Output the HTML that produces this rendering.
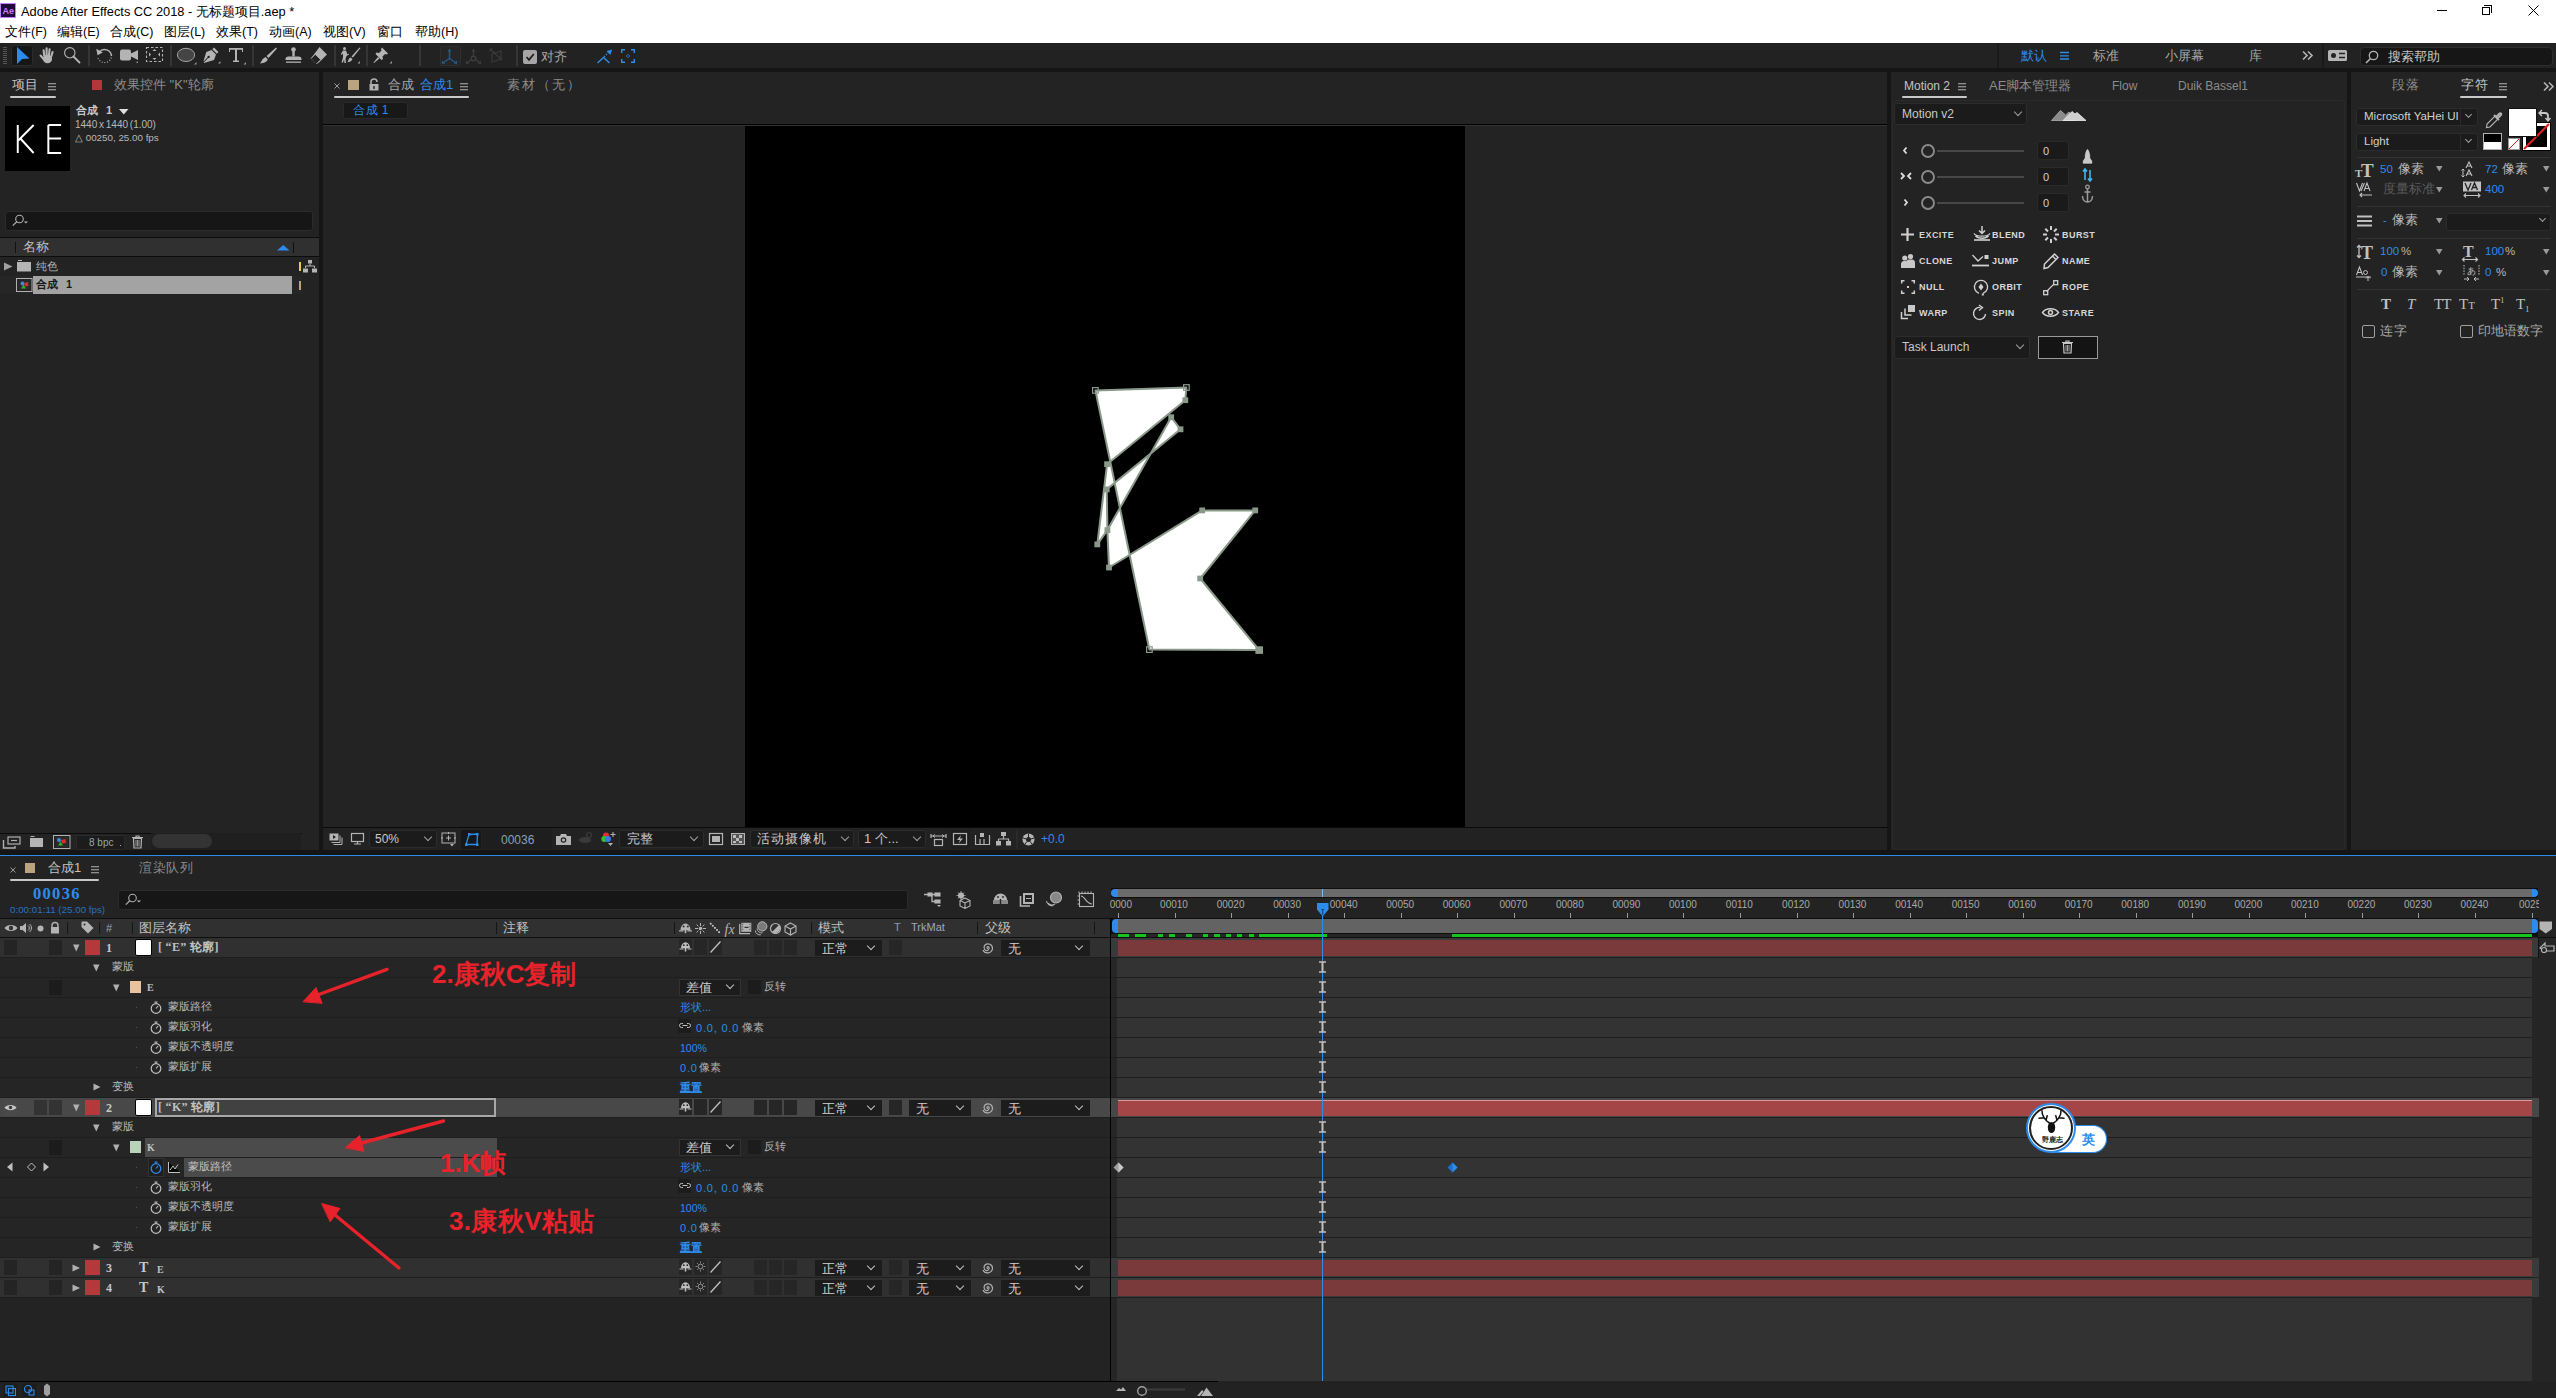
<!DOCTYPE html>
<html><head><meta charset="utf-8">
<style>
*{margin:0;padding:0;box-sizing:border-box}
html,body{width:2556px;height:1398px;overflow:hidden;background:#151515;font-family:"Liberation Sans",sans-serif;color:#a8a8a8;font-size:12px}
.a{position:absolute}
.t{position:absolute;white-space:nowrap;line-height:1}
.pnl{position:absolute;background:#232323}
svg{position:absolute;overflow:visible}
.sep{position:absolute;width:1.5px;background:#363636}
.dd{position:absolute;background:#1b1b1b;border:1px solid #2c2c2c;border-radius:3px}
.chev{position:absolute;width:6px;height:6px;border-right:1.3px solid #a0a0a0;border-bottom:1.3px solid #a0a0a0;transform:rotate(45deg)}
.blu{color:#2d8ceb}
</style></head><body>
<!-- ===== title bar + menu ===== -->
<div class="a" style="left:0;top:0;width:2556px;height:43px;background:#fff"></div>
<div class="a" style="left:0;top:3px;width:16px;height:15px;background:#1f0a3a;border:1px solid #c080ff"></div>
<div class="t" style="left:2.5px;top:6.5px;font-size:9px;color:#c77dff;font-weight:bold">Ae</div>
<div class="t" style="left:21px;top:5.8px;font-size:12.8px;color:#000">Adobe After Effects CC 2018 - 无标题项目.aep *</div>
<div class="a" style="left:2437px;top:10px;width:10px;height:1px;background:#000"></div>
<div class="a" style="left:2482px;top:7px;width:8px;height:8px;border:1px solid #000"></div>
<div class="a" style="left:2484px;top:5px;width:8px;height:8px;border-top:1px solid #000;border-right:1px solid #000"></div>
<svg style="left:2528px;top:5px" width="11" height="11"><path d="M0.5 0.5L10.5 10.5M10.5 0.5L0.5 10.5" stroke="#000" stroke-width="1"/></svg>
<div class="t" style="left:5px;top:26px;font-size:12.5px;color:#000">文件(F)</div>
<div class="t" style="left:57px;top:26px;font-size:12.5px;color:#000">编辑(E)</div>
<div class="t" style="left:110px;top:26px;font-size:12.5px;color:#000">合成(C)</div>
<div class="t" style="left:164px;top:26px;font-size:12.5px;color:#000">图层(L)</div>
<div class="t" style="left:216px;top:26px;font-size:12.5px;color:#000">效果(T)</div>
<div class="t" style="left:269px;top:26px;font-size:12.5px;color:#000">动画(A)</div>
<div class="t" style="left:323px;top:26px;font-size:12.5px;color:#000">视图(V)</div>
<div class="t" style="left:377px;top:26px;font-size:12.5px;color:#000">窗口</div>
<div class="t" style="left:415px;top:26px;font-size:12.5px;color:#000">帮助(H)</div>
<!-- ===== toolbar ===== -->
<div class="a" style="left:0;top:43px;width:2556px;height:25px;background:#222"></div>
<svg style="left:3px;top:46px" width="4" height="20"><g stroke="#555" stroke-width="1"><path d="M0 1.5H4M0 3.5H4M0 5.5H4M0 7.5H4M0 9.5H4M0 11.5H4M0 13.5H4M0 15.5H4M0 17.5H4"/></g></svg>
<div class="a" style="left:11px;top:45px;width:22px;height:21px;background:#161616;border:1px solid #2a2a2a;border-radius:3px"></div>
<svg style="left:16px;top:47px" width="14" height="18"><path d="M1 0L1 17L6 12L13.5 11.5Z" fill="#2d8ceb"/></svg>
<!-- hand -->
<svg style="left:39px;top:47px" width="17" height="17"><g stroke="#b4b4b4" stroke-width="2.1" stroke-linecap="round" fill="none"><path d="M5.2 9L4.6 3.2M7.6 8L7.6 1.2M10 8.2L10.6 2.2M12.2 9.5L13.6 5"/><path d="M4.5 12L1.5 8.5" stroke-width="2"/></g><ellipse cx="8.5" cy="12" rx="4.6" ry="4.2" fill="#b4b4b4"/></svg>
<!-- zoom -->
<svg style="left:64px;top:47px" width="17" height="17"><circle cx="5.8" cy="5.8" r="5.2" fill="none" stroke="#b4b4b4" stroke-width="1.1"/><path d="M9.5 9.5L15.5 15.5" stroke="#b4b4b4" stroke-width="1.8" stroke-linecap="round"/></svg>
<div class="sep" style="left:88px;top:45px;height:21px"></div>
<!-- rotate -->
<svg style="left:96px;top:47px" width="17" height="17"><path d="M3.2 5A7 7 0 0 1 15.5 9" fill="none" stroke="#b4b4b4" stroke-width="1.5"/><path d="M15.3 10.5A7 7 0 0 1 2 11" fill="none" stroke="#b4b4b4" stroke-width="1.1" stroke-dasharray="1 1.7"/><path d="M0.3 1.8L1.5 8.2L6.8 5.6Z" fill="#b4b4b4"/></svg>
<!-- camera -->
<svg style="left:120px;top:48px" width="19" height="16"><rect x="0" y="1.5" width="11" height="11" rx="2" fill="#b4b4b4"/><path d="M10 6L18 2V12L10 8Z" fill="#b4b4b4"/><path d="M18 13L18 15L16 15Z" fill="#999"/></svg>
<!-- pan behind -->
<svg style="left:146px;top:47px" width="17" height="17"><rect x="0.5" y="0.5" width="16" height="14" fill="none" stroke="#b4b4b4" stroke-width="1.1" stroke-dasharray="2.5 2"/><path d="M6.5 4H10.5L8.5 2Z M6.5 11H10.5L8.5 13Z M3 5.5V9.5L5 7.5Z M14 5.5V9.5L12 7.5Z" fill="#b4b4b4"/></svg>
<div class="sep" style="left:170px;top:45px;height:21px"></div>
<!-- ellipse -->
<svg style="left:177px;top:48px" width="20" height="17"><ellipse cx="9" cy="6.9" rx="8.6" ry="6.6" fill="#444" stroke="#b0b0b0" stroke-width="0.9"/><path d="M19.5 14L19.5 16.5L17 16.5Z" fill="#999"/></svg>
<!-- pen -->
<svg style="left:203px;top:47px" width="18" height="17"><path d="M11 0.5L15.5 5L13.8 6.7L9.3 2.2Z M8.5 3L13 7.5L11 13L1 16L0.8 15.5L5.2 11.1A1.2 1.2 0 1 0 4.5 10.4L0.3 14.8L3.3 5Z" fill="#b4b4b4"/><path d="M17.5 14L17.5 16.5L15 16.5Z" fill="#999"/></svg>
<!-- T -->
<svg style="left:229px;top:48px" width="18" height="17"><path d="M0 0H14V4H13V1.8H8V12.5H10V14H4V12.5H6V1.8H1V4H0Z" fill="#b4b4b4"/><path d="M17 14L17 16.5L14.5 16.5Z" fill="#999"/></svg>
<div class="sep" style="left:252px;top:45px;height:21px"></div>
<!-- brush -->
<svg style="left:260px;top:47px" width="17" height="17"><path d="M16 0.5L17 1.5L8.5 11L6.5 9Z" fill="#b4b4b4"/><path d="M5.5 10L7.8 12.2C7 15 4 16 0 16.5C1.5 15 2 11.5 5.5 10Z" fill="#b4b4b4"/></svg>
<!-- stamp -->
<svg style="left:285px;top:47px" width="17" height="17"><circle cx="8.5" cy="2.5" r="2.3" fill="#b4b4b4"/><rect x="7.3" y="3.5" width="2.4" height="6" fill="#b4b4b4"/><path d="M3.5 9.5H13.5C15.5 9.5 16.5 10.5 16.5 12V13H0.5V12C0.5 10.5 1.5 9.5 3.5 9.5Z" fill="#b4b4b4"/><rect x="1" y="14.5" width="15" height="1.3" fill="#b4b4b4"/></svg>
<!-- eraser -->
<svg style="left:310px;top:47px" width="18" height="17"><path d="M9.5 0L17 7.5L9 15.5L5.5 16L1 11.5Z" fill="#b4b4b4"/><path d="M1 11.5L5.3 7.2L10.8 12.7L6.5 17" fill="#222" stroke="#b4b4b4" stroke-width="1"/></svg>
<div class="sep" style="left:334px;top:45px;height:21px"></div>
<!-- puppet -->
<svg style="left:340px;top:47px" width="21" height="17"><circle cx="4.5" cy="1.5" r="1.5" fill="#b4b4b4"/><path d="M3 3.5H6L7.5 7.5L8.5 6.5L9 7.5L6.5 9L5.5 12L6 16H4.5L4 12.5L3 15.5H1.5L3 10.5L3 6.5L1.5 8L0.8 7Z" fill="#b4b4b4"/><path d="M19.5 0.5L20.5 1L13 10.5L11.5 9.5Z M10.5 10.5L12.5 12C11.5 14.5 9.5 15 7.5 15C8.5 13.5 8.5 11 10.5 10.5Z" fill="#b4b4b4"/><path d="M20 14L20 16.5L17.5 16.5Z" fill="#999"/></svg>
<div class="sep" style="left:366px;top:45px;height:21px"></div>
<!-- pin -->
<svg style="left:373px;top:47px" width="20" height="17"><path d="M9 0.5L15 6.5L13.5 7.5L12 7L9.5 9.5L10 12L8.5 13L2.5 7L3.5 5.5L6 6L8.5 3.5L8 2Z" fill="#b4b4b4"/><path d="M5 10L6.5 11.5L1 16L0.5 15.5Z" fill="#b4b4b4"/><path d="M19 14L19 16.5L16.5 16.5Z" fill="#999"/></svg>
<div class="sep" style="left:419px;top:45px;height:21px"></div>
<div class="a" style="left:440px;top:46px;width:21px;height:20px;background:#262626;border:1px solid #2e2e2e;border-radius:2px"></div>
<svg style="left:441px;top:48px" width="18" height="17"><path d="M8.5 3V10.5M8.5 10.5L2.5 14.5M8.5 10.5L14.5 14.5" stroke="#245a8c" stroke-width="1.4" fill="none"/><path d="M6.5 3.5L8.5 0.5L10.5 3.5Z M1 12.5L1 16L4.5 15.5Z M16 12.5L16 16L12.5 15.5Z" fill="#245a8c"/></svg>
<svg style="left:465px;top:48px" width="18" height="17"><path d="M8.5 3V8.5M6.5 11.5L2.5 14.5M10.5 11.5L14.5 14.5" stroke="#3e3e3e" stroke-width="1.3" fill="none"/><circle cx="8.5" cy="10.5" r="2.3" fill="none" stroke="#3e3e3e" stroke-width="1.3"/><path d="M6.5 3.5L8.5 0.5L10.5 3.5Z M1 12.5L1 16L4.5 15.5Z M16 12.5L16 16L12.5 15.5Z" fill="#3e3e3e"/></svg>
<svg style="left:489px;top:48px" width="16" height="16"><path d="M3 6L12 3V11L3 14Z M1 1L13 12" stroke="#3a3a3a" stroke-width="1.2" fill="none"/><path d="M0.5 0.5H4L0.5 4Z" fill="#3a3a3a"/></svg>
<div class="sep" style="left:516px;top:45px;height:21px"></div>
<div class="a" style="left:523px;top:50px;width:14px;height:14px;background:#a6a6a6;border-radius:2px"></div>
<svg style="left:525px;top:52px" width="10" height="10"><path d="M1.5 5L4 7.8L8.8 2" stroke="#1f1f1f" stroke-width="1.8" fill="none"/></svg>
<div class="t" style="left:541px;top:50px;font-size:13px;color:#a8a8a8">对齐</div>
<svg style="left:597px;top:49px" width="16" height="15"><path d="M0.5 14L6.5 8.5L12.5 14" stroke="#2d8ceb" stroke-width="1.4" fill="none"/><path d="M7 8L12 3" stroke="#2d8ceb" stroke-width="1.2" stroke-dasharray="1.5 1.2"/><path d="M9.5 2L15 0.5L13.5 6Z" fill="#2d8ceb"/></svg>
<svg style="left:621px;top:49px" width="14" height="14"><path d="M0.7 4V0.7H4M10 0.7H13.3V4M13.3 10V13.3H10M4 13.3H0.7V10" stroke="#2d8ceb" stroke-width="1.4" fill="none"/><path d="M5 7H6.5M7.5 7H9M7 5V6M7 8V9" stroke="#2d8ceb" stroke-width="1"/></svg>
<!-- right toolbar -->
<div class="sep" style="left:1997px;top:43px;height:25px;background:#1a1a1a"></div>
<div class="t blu" style="left:2021px;top:49px;font-size:13px">默认</div>
<svg style="left:2060px;top:51px" width="10" height="10"><path d="M0 1.5H9M0 4.8H9M0 8H9" stroke="#2d8ceb" stroke-width="1.3"/></svg>
<div class="t" style="left:2093px;top:49px;font-size:13px;color:#a8a8a8">标准</div>
<div class="t" style="left:2165px;top:49px;font-size:13px;color:#a8a8a8">小屏幕</div>
<div class="t" style="left:2249px;top:49px;font-size:13px;color:#a8a8a8">库</div>
<svg style="left:2302px;top:51px" width="12" height="9"><path d="M1 0.5L5 4.5L1 8.5M6 0.5L10 4.5L6 8.5" stroke="#b4b4b4" stroke-width="1.6" fill="none"/></svg>
<div class="sep" style="left:2322px;top:43px;height:25px;background:#1a1a1a"></div>
<svg style="left:2328px;top:50px" width="20" height="12"><rect x="0" y="0" width="19" height="11" rx="1.5" fill="#b4b4b4"/><circle cx="5.5" cy="5.5" r="2.5" fill="#222"/><path d="M11 3.5H17M11 7.5H17" stroke="#222" stroke-width="1.6"/></svg>
<div class="a" style="left:2360px;top:47px;width:193px;height:19px;background:#161616;border:1px solid #2d2d2d;border-radius:4px"></div>
<svg style="left:2365px;top:50px" width="14" height="14"><circle cx="8.5" cy="5.5" r="4.2" fill="none" stroke="#b4b4b4" stroke-width="1.3"/><path d="M5.5 8.5L1 13" stroke="#b4b4b4" stroke-width="1.6"/></svg>
<div class="t" style="left:2388px;top:50px;font-size:13px;color:#c8c8c8">搜索帮助</div>
<!-- gap row -->
<div class="a" style="left:0;top:68px;width:2556px;height:4px;background:#151515"></div>
<!-- ===== project panel ===== -->
<div class="pnl" style="left:0;top:72px;width:319px;height:778px"></div>
<div class="t" style="left:12px;top:78px;font-size:13px;color:#c4c4c4">项目</div>
<svg style="left:48px;top:83px" width="9" height="8"><path d="M0 0.7H8M0 3.7H8M0 6.7H8" stroke="#b4b4b4" stroke-width="1.1"/></svg>
<div class="a" style="left:10px;top:96px;width:46px;height:2px;background:#c8c8c8;border-radius:1px"></div>
<div class="a" style="left:92px;top:80px;width:10px;height:10px;background:#b5363a"></div>
<div class="t" style="left:114px;top:78px;font-size:13px;color:#8c8c8c">效果控件 "K"轮廓</div>
<div class="a" style="left:5px;top:106px;width:65px;height:65px;background:#000"></div>
<svg style="left:16px;top:125px" width="46" height="30"><path d="M1.8 0V28M1.8 16L18 0M4.5 13.5L18 28M33 0V28H46M33 0H46M33 13.5H46" stroke="#fff" stroke-width="2" fill="none" transform="scale(0.98,1)"/></svg>
<div class="t" style="left:76px;top:105px;font-size:11px;color:#c8c8c8;font-weight:bold;word-spacing:5px">合成 1</div>
<svg style="left:119px;top:109px" width="10" height="6"><path d="M0 0H9.5L4.75 5.5Z" fill="#e0e0e0"/></svg>
<div class="t" style="left:75px;top:120px;font-size:10px;color:#b8b8b8;word-spacing:-1px">1440 x 1440 (1.00)</div>
<div class="t" style="left:75px;top:133px;font-size:9.8px;color:#b8b8b8">△ 00250, 25.00 fps</div>
<!-- search -->
<div class="a" style="left:5px;top:211px;width:308px;height:20px;background:#161616;border:1px solid #2b2b2b;border-radius:3px"></div>
<svg style="left:12px;top:214px" width="18" height="13"><circle cx="7.5" cy="5" r="3.8" fill="none" stroke="#b0b0b0" stroke-width="1.1"/><path d="M5 7.5L0.8 11.7" stroke="#b0b0b0" stroke-width="1.2"/><path d="M11.8 7.5H16L13.9 9.5Z" fill="#b0b0b0"/></svg>
<!-- header -->
<div class="a" style="left:0;top:237px;width:319px;height:1px;background:#0c0c0c"></div>
<div class="a" style="left:0;top:238px;width:319px;height:18px;background:#303030"></div>
<div class="a" style="left:0;top:256px;width:319px;height:1px;background:#0c0c0c"></div>
<div class="a" style="left:15px;top:242px;width:1px;height:11px;background:#111"></div>
<div class="t" style="left:23px;top:240px;font-size:13px;color:#c0c0c0">名称</div>
<svg style="left:277px;top:245px" width="13" height="6"><path d="M0 5.5H12.5L6.25 0Z" fill="#2d8ceb"/></svg>
<div class="a" style="left:293px;top:242px;width:1px;height:11px;background:#111"></div>
<!-- row solid -->
<svg style="left:4px;top:262px" width="9" height="9"><path d="M0 0.5L8.5 4.5L0 8.5Z" fill="#a0a0a0"/></svg>
<svg style="left:17px;top:260px" width="15" height="12"><rect x="0" y="2" width="14" height="9.5" fill="#b4b4b4"/><rect x="1" y="0" width="4" height="1" fill="#b4b4b4"/></svg>
<div class="t" style="left:36px;top:261px;font-size:11px;color:#b0b0b0">纯色</div>
<div class="a" style="left:299px;top:262px;width:2px;height:9px;background:#e3cf4e"></div>
<svg style="left:303px;top:260px" width="14" height="13"><rect x="5" y="0" width="4" height="3.5" fill="#b4b4b4"/><path d="M7 3.5V6M2.5 6H11.5V8M2.5 6V8" stroke="#b4b4b4" stroke-width="1" fill="none"/><rect x="0" y="8.5" width="5" height="4" fill="#b4b4b4"/><rect x="9" y="8.5" width="5" height="4" fill="#b4b4b4"/></svg>
<!-- row comp -->
<div class="a" style="left:0;top:276px;width:302px;height:18px;background:#262626"></div>
<div class="a" style="left:33px;top:276px;width:259px;height:18px;background:#a3a3a3"></div>
<svg style="left:16px;top:278px" width="17" height="14"><rect x="0.5" y="0.5" width="15.5" height="13" fill="none" stroke="#b0b0b0"/><rect x="2.5" y="2.5" width="11.5" height="9" fill="#2a2a2a"/><circle cx="6.5" cy="5.5" r="2" fill="#3a8be0"/><path d="M8 5L12 4L12.5 8L9 8.5Z" fill="#d03030"/><path d="M5 10.5L7.5 6.5L10 10.5Z" fill="#2eb02e"/></svg>
<div class="t" style="left:36px;top:279px;font-size:11px;color:#1a1a1a;font-weight:bold;word-spacing:5px">合成 1</div>
<div class="a" style="left:299px;top:281px;width:2px;height:9px;background:#b9a47e"></div>
<!-- bottom bar -->
<div class="a" style="left:0;top:833px;width:302px;height:1px;background:#0c0c0c"></div>
<svg style="left:3px;top:836px" width="18" height="13"><rect x="5" y="1" width="12" height="7" fill="none" stroke="#b0b0b0" stroke-width="1.2"/><path d="M8 4.5H14" stroke="#b0b0b0" stroke-width="1.2"/><path d="M0.5 4V12H12V10" stroke="#b0b0b0" stroke-width="1.4" fill="none"/></svg>
<svg style="left:30px;top:836px" width="14" height="11"><rect x="0" y="2" width="13" height="9" fill="#b4b4b4"/><rect x="0.5" y="0" width="4" height="1" fill="#b4b4b4"/></svg>
<svg style="left:53px;top:835px" width="18" height="14"><rect x="0.5" y="0.5" width="16.5" height="13" fill="none" stroke="#b0b0b0"/><rect x="2.5" y="1.5" width="12.5" height="11" fill="#2a2a2a"/><circle cx="6" cy="5" r="2" fill="#3a8be0"/><path d="M8 5L12.5 4L13 8L9 8.5Z" fill="#d03030"/><path d="M5 10.5L7.5 6.5L10 10.5Z" fill="#2eb02e"/></svg>
<div class="a" style="left:76px;top:835px;width:49px;height:15px;background:#1c1c1c;border:1px solid #2a2a2a;border-radius:2px"></div>
<div class="t" style="left:89px;top:838px;font-size:10px;color:#9aa4b0">8 bpc</div>
<div class="a" style="left:120px;top:845px;width:1px;height:1px;background:#aaa"></div>
<svg style="left:132px;top:835px" width="12" height="14"><path d="M0 2.5H11M4 2.5V1H7V2.5" stroke="#b4b4b4" stroke-width="1.2" fill="none"/><path d="M1.5 3.5H9.5L9 13H2Z" fill="none" stroke="#b4b4b4" stroke-width="1.2"/><path d="M4 5V11.5M5.5 5V11.5M7 5V11.5" stroke="#b4b4b4" stroke-width="0.8"/></svg>
<div class="a" style="left:151px;top:833px;width:150px;height:17px;background:#1f1f1f"></div>
<div class="a" style="left:152px;top:834px;width:60px;height:14px;background:#333;border-radius:7px"></div>
<!-- ===== comp panel ===== -->
<div class="pnl" style="left:323px;top:72px;width:1564px;height:778px"></div>
<svg style="left:334px;top:83px" width="6" height="6"><path d="M0.5 0.5L5.5 5.5M5.5 0.5L0.5 5.5" stroke="#999" stroke-width="1"/></svg>
<div class="a" style="left:348px;top:80px;width:11px;height:10px;background:#b9a47e"></div>
<svg style="left:369px;top:79px" width="10" height="12"><path d="M2 5V3A3 3 0 0 1 8 3" stroke="#b0b0b0" stroke-width="1.5" fill="none"/><rect x="0.5" y="5" width="9" height="6.5" fill="#b0b0b0"/><rect x="4.3" y="7" width="1.4" height="3" fill="#232323"/></svg>
<div class="t" style="left:388px;top:78px;font-size:13px;color:#a8a8a8">合成</div>
<div class="t blu" style="left:420px;top:78px;font-size:13px">合成1</div>
<svg style="left:460px;top:83px" width="9" height="8"><path d="M0 0.7H8M0 3.7H8M0 6.7H8" stroke="#b4b4b4" stroke-width="1.1"/></svg>
<div class="a" style="left:334px;top:96px;width:135px;height:2px;background:#c8c8c8;border-radius:1px"></div>
<div class="t" style="left:507px;top:78px;font-size:13px;color:#8c8c8c;letter-spacing:2px">素材（无）</div>
<div class="a" style="left:343px;top:102px;width:65px;height:17px;background:#181818;border:1px solid #2a2a2a;border-radius:3px"></div>
<div class="t blu" style="left:353px;top:104px;font-size:12px;letter-spacing:0.5px">合成 1</div>
<div class="a" style="left:323px;top:124px;width:1564px;height:1px;background:#000"></div>
<div class="a" style="left:323px;top:125px;width:1564px;height:1px;background:#333"></div>
<!-- canvas -->
<div class="a" style="left:745px;top:126px;width:720px;height:701px;background:#000"></div>
<svg style="left:0;top:0" width="2556" height="1398">
<path d="M1095.4 390.4L1186.4 387.5L1185.3 400.2L1107.1 464.2L1097.3 544.4L1107.4 530.1L1171.2 417.2L1180.5 429.3L1106.7 489.4L1107.4 530.1L1109 567.5L1202.2 510.4L1255.2 510.4L1200.2 578.5L1259.2 650.1L1149.4 649.6Z" fill="#fff" fill-rule="evenodd" stroke="#8b998a" stroke-width="2" stroke-linejoin="round"/>
<rect x="1092.6" y="387.6" width="5.6" height="5.6" fill="none" stroke="#8b998a" stroke-width="1.2"/>
<rect x="1183.6" y="384.7" width="5.6" height="5.6" fill="none" stroke="#8b998a" stroke-width="1.2"/>
<rect x="1182.4" y="397.3" width="5.8" height="5.8" fill="#8b998a"/>
<rect x="1168.3" y="414.3" width="5.8" height="5.8" fill="#8b998a"/>
<rect x="1177.6" y="426.4" width="5.8" height="5.8" fill="#8b998a"/>
<rect x="1104.2" y="461.3" width="5.8" height="5.8" fill="#8b998a"/>
<rect x="1103.8" y="486.5" width="5.8" height="5.8" fill="#8b998a"/>
<rect x="1104.5" y="527.2" width="5.8" height="5.8" fill="#8b998a"/>
<rect x="1094.4" y="541.5" width="5.8" height="5.8" fill="#8b998a"/>
<rect x="1106.1" y="564.6" width="5.8" height="5.8" fill="#8b998a"/>
<rect x="1199.3" y="507.5" width="5.8" height="5.8" fill="#8b998a"/>
<rect x="1252.3" y="507.5" width="5.8" height="5.8" fill="#8b998a"/>
<rect x="1197.3" y="575.6" width="5.8" height="5.8" fill="#8b998a"/>
<rect x="1255.4" y="646.3" width="7.6" height="7.6" fill="#8b998a"/>
<rect x="1146.6" y="646.8" width="5.6" height="5.6" fill="none" stroke="#8b998a" stroke-width="1.2"/>
</svg>
<!-- viewer bottom toolbar -->
<div class="a" style="left:323px;top:827px;width:1564px;height:1px;background:#0a0a0a"></div>
<div class="a" style="left:323px;top:828px;width:1564px;height:22px;background:#222"></div>
<svg style="left:329px;top:833px" width="14" height="13"><rect x="0.5" y="0.5" width="9" height="7" fill="#b4b4b4"/><path d="M4 2L7 4L4 6Z" fill="#222"/><path d="M11 2.5V9.5H2.5M13 4.5V11.5H4.5" stroke="#b4b4b4" stroke-width="1" fill="none"/></svg>
<svg style="left:351px;top:833px" width="13" height="12"><rect x="0.5" y="0.5" width="12" height="8" fill="none" stroke="#b4b4b4" stroke-width="1.2"/><path d="M6.5 8.5V10.5M3 11H10" stroke="#b4b4b4" stroke-width="1.2"/></svg>
<div class="dd" style="left:369px;top:830px;width:68px;height:18px"></div>
<div class="t" style="left:375px;top:833px;font-size:12px;color:#c8c8c8">50%</div>
<div class="chev" style="left:425px;top:834px"></div>
<svg style="left:441px;top:832px" width="16" height="16"><rect x="1" y="1" width="13" height="10" fill="none" stroke="#b4b4b4" stroke-width="1"/><path d="M7.5 3.5V8.5M5 6H10" stroke="#b4b4b4" stroke-width="1"/><path d="M0 6H2M13 6H15M7.5 0V2" stroke="#b4b4b4"/><path d="M9 12H13L11 14.5Z" fill="#b4b4b4"/></svg>
<div class="a" style="left:461px;top:830px;width:20px;height:19px;background:#171717;border-radius:3px"></div>
<svg style="left:465px;top:833px" width="14" height="13"><path d="M4 1.5L12.5 1L12 11.5L1 11.5Z" fill="none" stroke="#2d8ceb" stroke-width="1.3"/><rect x="3" y="0" width="2.5" height="2.5" fill="#2d8ceb"/><rect x="11" y="0" width="2.5" height="2.5" fill="#2d8ceb"/><rect x="0" y="10.5" width="2.5" height="2.5" fill="#2d8ceb"/><rect x="11" y="10.5" width="2.5" height="2.5" fill="#2d8ceb"/></svg>
<div class="a" style="left:482px;top:829px;width:70px;height:20px;background:#1e1e1e"></div>
<div class="t" style="left:501px;top:834px;font-size:12px;color:#8aa0b8">00036</div>
<svg style="left:556px;top:833px" width="15" height="12"><path d="M0 3H4L5 1H10L11 3H15V12H0Z" fill="#b4b4b4"/><circle cx="7.5" cy="7" r="2.8" fill="#222"/><circle cx="7.5" cy="7" r="1.6" fill="#b4b4b4"/></svg>
<svg style="left:578px;top:832px" width="15" height="13"><path d="M0.5 8C3 4 11 4 13.5 8C11 12 3 12 0.5 8Z" fill="#3a3a3a"/><circle cx="11" cy="3" r="2.5" fill="none" stroke="#3a3a3a" stroke-width="1.2"/></svg>
<svg style="left:601px;top:831px" width="15" height="17"><circle cx="5" cy="4.5" r="3" fill="#e03030"/><circle cx="3.3" cy="8" r="3" fill="#30c030"/><circle cx="7" cy="8" r="3" fill="#3a7ae8"/><path d="M12 1V6M9.5 3.5H14.5" stroke="#b4b4b4" stroke-width="1.1"/><path d="M7 12H12L9.5 15Z" fill="#b4b4b4"/></svg>
<div class="dd" style="left:619px;top:830px;width:85px;height:18px"></div>
<div class="t" style="left:627px;top:832px;font-size:13px;color:#c8c8c8">完整</div>
<div class="chev" style="left:691px;top:834px"></div>
<svg style="left:709px;top:833px" width="14" height="12"><rect x="0.5" y="0.5" width="13" height="11" fill="none" stroke="#b4b4b4" stroke-width="1.2"/><rect x="3" y="3" width="8" height="6" fill="#b4b4b4"/></svg>
<svg style="left:731px;top:833px" width="14" height="12"><rect x="0.5" y="0.5" width="13" height="11" fill="#555" stroke="#b4b4b4" stroke-width="1"/><path d="M2 2H5V5H2ZM8 2H11V5H8ZM5 5H8V8H5ZM2 8H5V10H2ZM8 8H11V10H8Z" fill="#bbb"/></svg>
<div class="dd" style="left:750px;top:830px;width:104px;height:18px"></div>
<div class="t" style="left:757px;top:832px;font-size:13px;color:#c8c8c8;letter-spacing:1px">活动摄像机</div>
<div class="chev" style="left:842px;top:834px"></div>
<div class="dd" style="left:858px;top:830px;width:68px;height:18px"></div>
<div class="t" style="left:864px;top:832px;font-size:13px;color:#c8c8c8">1 个...</div>
<div class="chev" style="left:914px;top:834px"></div>
<svg style="left:930px;top:833px" width="17" height="13"><path d="M1 1V5M16 1V5M1 3H16" stroke="#b4b4b4" stroke-width="1.2"/><path d="M3 3L5 1.5M3 3L5 4.5M14 3L12 1.5M14 3L12 4.5" stroke="#b4b4b4"/><rect x="4.5" y="6.5" width="8" height="6" fill="none" stroke="#b4b4b4" stroke-width="1.2"/></svg>
<div class="a" style="left:951px;top:830px;width:19px;height:19px;background:#1e1e1e"></div>
<svg style="left:953px;top:833px" width="15" height="13"><rect x="0.5" y="0.5" width="13" height="11" fill="none" stroke="#b4b4b4" stroke-width="1.2"/><path d="M8 2L4 7H7L5.5 10.5L10 5.5H7Z" fill="#b4b4b4"/></svg>
<svg style="left:975px;top:833px" width="15" height="12"><rect x="5" y="0" width="4" height="4" fill="#b4b4b4"/><path d="M0.5 2V11.5H14.5V2M5 6V11M9 6V11" stroke="#b4b4b4" stroke-width="1.2" fill="none"/></svg>
<svg style="left:996px;top:832px" width="15" height="14"><rect x="5" y="0" width="5" height="4" fill="#b4b4b4"/><path d="M7.5 4V7M2.5 7H12.5V9M2.5 7V9" stroke="#b4b4b4" stroke-width="1.2" fill="none"/><rect x="0" y="9" width="5" height="4.5" fill="#b4b4b4"/><rect x="10" y="9" width="5" height="4.5" fill="#b4b4b4"/></svg>
<div class="sep" style="left:1016px;top:830px;height:19px;background:#2a2a2a"></div>
<svg style="left:1022px;top:833px" width="13" height="13"><circle cx="6.5" cy="6.5" r="6" fill="#b4b4b4"/><circle cx="6.5" cy="6.5" r="2.5" fill="#222"/><path d="M6.5 0.5L6.5 4M12 5L9 6M10 11L8 8.5M3 11L5 8.5M1 5L4 6" stroke="#222" stroke-width="1"/></svg>
<div class="t blu" style="left:1041px;top:833px;font-size:12px">+0.0</div>
<!-- ===== Motion 2 panel ===== -->
<div class="pnl" style="left:1891px;top:72px;width:456px;height:778px"></div>
<div class="t" style="left:1904px;top:80px;font-size:12px;color:#c4c4c4">Motion 2</div>
<svg style="left:1958px;top:83px" width="9" height="8"><path d="M0 0.7H8M0 3.7H8M0 6.7H8" stroke="#b4b4b4" stroke-width="1.1"/></svg>
<div class="a" style="left:1902px;top:96px;width:65px;height:2px;background:#c8c8c8;border-radius:1px"></div>
<div class="t" style="left:1989px;top:79px;font-size:13px;color:#8c8c8c">AE脚本管理器</div>
<div class="t" style="left:2112px;top:80px;font-size:12px;color:#8c8c8c">Flow</div>
<div class="t" style="left:2178px;top:80px;font-size:12px;color:#8c8c8c">Duik Bassel1</div>
<div class="a" style="left:1892px;top:100px;width:453px;height:750px;border:1px solid #2a2a2a;border-radius:3px"></div>
<div class="dd" style="left:1894px;top:103px;width:133px;height:22px"></div>
<div class="t" style="left:1902px;top:108px;font-size:12px;color:#c8c8c8">Motion v2</div>
<div class="chev" style="left:2015px;top:109px"></div>
<svg style="left:2051px;top:108px" width="37" height="13"><path d="M0.5 12.5L9.5 2.5L14.5 7L18 4L25 12.5Z" fill="#8a8a8a" stroke="#b0b0b0" stroke-width="0.8"/><path d="M12 12.5L21 3.5L24 6L26 4.5L35 12.5Z" fill="#cfcfcf" stroke="#eee" stroke-width="0.8"/></svg>
<!-- sliders -->
<svg style="left:1900px;top:144px" width="200" height="62">
<path d="M6.5 3.5L4 6.5L6.5 9.5" stroke="#ddd" stroke-width="1.8" fill="none"/>
<path d="M1 29L4 32L1 35M11 29L8 32L11 35" stroke="#ddd" stroke-width="1.8" fill="none"/>
<path d="M4.5 55.5L7 58.5L4.5 61.5" stroke="#ddd" stroke-width="1.8" fill="none"/>
<g stroke="#8a8a8a" fill="none" stroke-width="1.9"><circle cx="28" cy="7" r="6"/><circle cx="28" cy="33" r="6"/><circle cx="28" cy="59" r="6"/></g>
<g stroke="#484848" stroke-width="1.8"><path d="M37 7H124M37 33H124M37 59H124"/></g>
</svg>
<div class="a" style="left:2037px;top:141px;width:32px;height:19px;background:#1a1a1a;border:1px solid #2a2a2a;border-radius:3px"></div>
<div class="a" style="left:2037px;top:167px;width:32px;height:19px;background:#1a1a1a;border:1px solid #2a2a2a;border-radius:3px"></div>
<div class="a" style="left:2037px;top:193px;width:32px;height:19px;background:#1a1a1a;border:1px solid #2a2a2a;border-radius:3px"></div>
<div class="t" style="left:2043px;top:146px;font-size:11px;color:#d0d0d0">0</div>
<div class="t" style="left:2043px;top:172px;font-size:11px;color:#d0d0d0">0</div>
<div class="t" style="left:2043px;top:198px;font-size:11px;color:#d0d0d0">0</div>
<svg style="left:2081px;top:148px" width="14" height="58">
<path d="M6.5 0.5C9 3 9.5 6 9.5 10L11.5 13V16H1.5V13L3.5 10C3.5 6 4 3 6.5 0.5Z" fill="#c8c8c8" stroke="#111" stroke-width="0.6"/>
<path d="M4 21V32M2 23.5L4 21L6 23.5M9 22V33M7 30.5L9 33L11 30.5" stroke="#3fb7f0" stroke-width="1.6" fill="none"/>
<circle cx="6.5" cy="39" r="1.8" fill="none" stroke="#9a9a9a" stroke-width="1.3"/><path d="M6.5 41V54M1.5 48C1.5 52 4 54 6.5 54C9 54 11.5 52 11.5 48M3.5 44H9.5" stroke="#9a9a9a" stroke-width="1.5" fill="none"/>
</svg>
<!-- motion buttons -->
<svg style="left:1898px;top:225px" width="200" height="100" fill="none" stroke="#d0d0d0" stroke-width="1.4">
<path d="M9.5 3V16M3 9.5H16" stroke-width="2.2"/>
<path d="M84 1V8M81 5.5L84 8.5L87 5.5" stroke-width="1.5"/><path d="M76 8.5C78 12 90 12 92 8.5M77.5 11C80 14 88 14 90.5 11" stroke-width="1.3"/><path d="M76 15H92" stroke-width="1.6"/>
<g stroke-width="2"><path d="M153 1V5M153 14V18M145 9.5H149M157 9.5H161M147.3 3.8L150 6.5M156 12.5L158.7 15.2M158.7 3.8L156 6.5M150 12.5L147.3 15.2"/></g>
<g fill="#c8c8c8" stroke="none"><circle cx="12.5" cy="31.5" r="2.6"/><path d="M8 43V37.5C8 35.5 9.5 34.5 11 34.5H14C15.5 34.5 17 35.5 17 37.5V43Z"/><circle cx="6.8" cy="33" r="2.6"/><path d="M3 43V39C3 37 4.5 36 6 36H8.5V43Z"/></g>
<path d="M74.5 30L80 36L85 31.5" stroke-width="1.3"/><rect x="86.5" y="30" width="4" height="4" fill="#d0d0d0" stroke="none"/><path d="M74 40.5H91" stroke-width="1.8"/>
<path d="M146 43.5L146.5 39L156.5 29L160 32.5L150 42.5Z M154.5 31L158 34.5" stroke-width="1.5"/>
<path d="M3.7 58.5V55.7H6.5M13.5 55.7H16.3V58.5M16.3 65.5V68.3H13.5M6.5 68.3H3.7V65.5" stroke-width="1.5"/><rect x="9" y="61" width="2" height="2" fill="#d0d0d0" stroke="none"/>
<path d="M81 68.3A6.6 6.6 0 1 1 85 68.3" stroke-width="1.3"/><path d="M83 58.5L85.5 62L83 65.5L80.5 62Z" fill="#d0d0d0" stroke="none"/><rect x="83.8" y="68.5" width="2" height="2" fill="#d0d0d0" stroke="none"/>
<rect x="145.7" y="65.7" width="4" height="4" stroke-width="1.3"/><rect x="155.7" y="55.7" width="4" height="4" stroke-width="1.3"/><path d="M148.5 66.5L156 59" stroke-width="1.1"/>
<rect x="10" y="80" width="7" height="7" fill="#c8c8c8" stroke="none"/><path d="M7 83.5V90H13.5M3.5 87V93.5H10" stroke-width="1.5"/>
<path d="M87.5 89A6 6 0 1 1 82.5 82.5" stroke-width="1.4"/><path d="M81 80L84.5 82.5L81 85.5" stroke-width="1.4"/>
<path d="M144.5 87.5C148 82.5 157 82.5 160.5 87.5C157 92.5 148 92.5 144.5 87.5Z" stroke-width="1.4"/><circle cx="152.5" cy="87.5" r="2" stroke-width="1.5"/>
</svg>
<div class="t" style="left:1919px;top:231px;font-size:9px;font-weight:bold;color:#d8d8d8;letter-spacing:0.45px;text-shadow:0 0 1px #000">EXCITE</div>
<div class="t" style="left:1992px;top:231px;font-size:9px;font-weight:bold;color:#d8d8d8;letter-spacing:0.45px">BLEND</div>
<div class="t" style="left:2062px;top:231px;font-size:9px;font-weight:bold;color:#d8d8d8;letter-spacing:0.45px">BURST</div>
<div class="t" style="left:1919px;top:257px;font-size:9px;font-weight:bold;color:#d8d8d8;letter-spacing:0.45px">CLONE</div>
<div class="t" style="left:1992px;top:257px;font-size:9px;font-weight:bold;color:#d8d8d8;letter-spacing:0.45px">JUMP</div>
<div class="t" style="left:2062px;top:257px;font-size:9px;font-weight:bold;color:#d8d8d8;letter-spacing:0.45px">NAME</div>
<div class="t" style="left:1919px;top:283px;font-size:9px;font-weight:bold;color:#d8d8d8;letter-spacing:0.45px">NULL</div>
<div class="t" style="left:1992px;top:283px;font-size:9px;font-weight:bold;color:#d8d8d8;letter-spacing:0.45px">ORBIT</div>
<div class="t" style="left:2062px;top:283px;font-size:9px;font-weight:bold;color:#d8d8d8;letter-spacing:0.45px">ROPE</div>
<div class="t" style="left:1919px;top:309px;font-size:9px;font-weight:bold;color:#d8d8d8;letter-spacing:0.45px">WARP</div>
<div class="t" style="left:1992px;top:309px;font-size:9px;font-weight:bold;color:#d8d8d8;letter-spacing:0.45px">SPIN</div>
<div class="t" style="left:2062px;top:309px;font-size:9px;font-weight:bold;color:#d8d8d8;letter-spacing:0.45px">STARE</div>
<div class="dd" style="left:1894px;top:336px;width:136px;height:23px"></div>
<div class="t" style="left:1902px;top:341px;font-size:12px;color:#c8c8c8">Task Launch</div>
<div class="chev" style="left:2017px;top:342px"></div>
<div class="a" style="left:2038px;top:336px;width:60px;height:23px;background:#141414;border:1.5px solid #9a9a9a"></div>
<svg style="left:2062px;top:340px" width="12" height="14"><path d="M0 2.5H11M4 2.5V1H7V2.5" stroke="#c8c8c8" stroke-width="1.2" fill="none"/><path d="M1.5 3.5H9.5L9 13H2Z" fill="none" stroke="#c8c8c8" stroke-width="1.2"/><path d="M4 5V11.5M5.5 5V11.5M7 5V11.5" stroke="#c8c8c8" stroke-width="0.8"/></svg>
<!-- ===== Character panel ===== -->
<div class="pnl" style="left:2351px;top:72px;width:205px;height:778px"></div>
<div class="t" style="left:2392px;top:78px;font-size:13px;color:#8c8c8c;letter-spacing:1px">段落</div>
<div class="t" style="left:2461px;top:78px;font-size:13px;color:#c4c4c4;letter-spacing:1px">字符</div>
<svg style="left:2499px;top:83px" width="9" height="8"><path d="M0 0.7H8M0 3.7H8M0 6.7H8" stroke="#b4b4b4" stroke-width="1.1"/></svg>
<div class="a" style="left:2460px;top:96px;width:47px;height:2px;background:#c8c8c8;border-radius:1px"></div>
<svg style="left:2543px;top:82px" width="11" height="9"><path d="M1 0.5L5 4.5L1 8.5M6 0.5L10 4.5L6 8.5" stroke="#b4b4b4" stroke-width="1.6" fill="none"/></svg>
<div class="dd" style="left:2356px;top:108px;width:122px;height:18px"></div>
<div class="a" style="left:2460px;top:109px;width:1px;height:16px;background:#2a2a2a"></div>
<div class="t" style="left:2364px;top:111px;font-size:11.5px;color:#d0d0d0">Microsoft YaHei UI</div>
<div class="chev" style="left:2466px;top:112px;width:5px;height:5px"></div>
<div class="dd" style="left:2356px;top:133px;width:122px;height:18px"></div>
<div class="a" style="left:2460px;top:134px;width:1px;height:16px;background:#2a2a2a"></div>
<div class="t" style="left:2364px;top:136px;font-size:11.5px;color:#d0d0d0">Light</div>
<div class="chev" style="left:2466px;top:137px;width:5px;height:5px"></div>
<svg style="left:2485px;top:111px" width="18" height="18"><path d="M1.5 16.5L2 13L10 5L13 8L5 16Z" fill="none" stroke="#b4b4b4" stroke-width="1.1"/><path d="M9 4L14 9M11 6L14.5 2.5C15.5 1.5 17 3 16 4L12.5 7.5" stroke="#b4b4b4" stroke-width="1.8" fill="none"/></svg>
<div class="a" style="left:2483px;top:133px;width:19px;height:17px;border:1px solid #b0b0b0;background:linear-gradient(#000 0 55%,#fff 55%)"></div>
<div class="a" style="left:2508px;top:138px;width:12px;height:12px;background:#fff;border:1px solid #999"></div>
<svg style="left:2508px;top:138px" width="12" height="12"><path d="M1 11L11 1" stroke="#d02020" stroke-width="1"/></svg>
<div class="a" style="left:2522px;top:122px;width:29px;height:29px;background:#fff;border:1px solid #000"></div>
<div class="a" style="left:2526px;top:126px;width:21px;height:21px;background:#000"></div>
<svg style="left:2522px;top:122px" width="29" height="29"><path d="M2 27L27 2" stroke="#e02020" stroke-width="2.2"/></svg>
<div class="a" style="left:2508px;top:108px;width:29px;height:29px;background:#fff;border:1px solid #111"></div>
<svg style="left:2538px;top:109px" width="13" height="13"><path d="M2 4H7C9 4 10 5 10 7V11" stroke="#c8c8c8" stroke-width="1.8" fill="none"/><path d="M4 1L1 4L4 7M7.5 9L10 12L12.5 9" stroke="#c8c8c8" stroke-width="1.4" fill="none"/></svg>
<div class="a" style="left:2357px;top:157px;width:194px;height:1px;background:#333"></div>
<!-- size rows -->
<svg style="left:2355px;top:160px" width="22" height="18"><text x="0" y="16.5" font-size="11" font-weight="bold" font-family="Liberation Serif" fill="#c0c0c0">T</text><text x="6" y="16.5" font-size="19" font-weight="bold" font-family="Liberation Serif" fill="#c0c0c0">T</text></svg>
<div class="t blu" style="left:2380px;top:164px;font-size:11.5px">50</div>
<div class="t" style="left:2398px;top:163px;font-size:12.5px;color:#b8b8b8">像素</div>
<svg style="left:2436px;top:166px" width="7" height="6"><path d="M0 0H6.5L3.25 5.5Z" fill="#9a9a9a"/></svg>
<svg style="left:2461px;top:161px" width="17" height="17"><path d="M5 7L8 1L11 7M6 5H10M5 15L8 9L11 15M6 13H10" stroke="#c0c0c0" stroke-width="1.1" fill="none"/><path d="M2 8V16M0.5 9.5L2 8L3.5 9.5M0.5 14.5L2 16L3.5 14.5" stroke="#c0c0c0" stroke-width="1" fill="none"/></svg>
<div class="t blu" style="left:2485px;top:164px;font-size:11.5px">72</div>
<div class="t" style="left:2502px;top:163px;font-size:12.5px;color:#b8b8b8">像素</div>
<svg style="left:2543px;top:166px" width="7" height="6"><path d="M0 0H6.5L3.25 5.5Z" fill="#9a9a9a"/></svg>
<svg style="left:2356px;top:182px" width="18" height="16"><path d="M0.5 1L3.5 9L6.5 1M5 9L8.5 1M8 9L11 1L14 9M9 6.5H13" stroke="#c0c0c0" stroke-width="1.1" fill="none"/><path d="M4 13H16M6 11L4 13L6 15" stroke="#c0c0c0" stroke-width="1.1" fill="none"/></svg>
<div class="t" style="left:2383px;top:183px;font-size:12.5px;color:#5a5a5a">度量标准</div>
<svg style="left:2436px;top:187px" width="7" height="6"><path d="M0 0H6.5L3.25 5.5Z" fill="#9a9a9a"/></svg>
<svg style="left:2463px;top:181px" width="19" height="18"><rect x="0" y="0.5" width="18" height="10" fill="#c0c0c0"/><path d="M2 2L5 9L8 2M8.5 9L11.5 2L14.5 9M9.7 6.5H13.3" stroke="#232323" stroke-width="1.3" fill="none"/><path d="M1 14.5H17M3 12.5L1 14.5L3 16.5M15 12.5L17 14.5L15 16.5" stroke="#c0c0c0" stroke-width="1.1" fill="none"/></svg>
<div class="t blu" style="left:2485px;top:184px;font-size:11.5px">400</div>
<svg style="left:2543px;top:187px" width="7" height="6"><path d="M0 0H6.5L3.25 5.5Z" fill="#9a9a9a"/></svg>
<div class="a" style="left:2357px;top:206px;width:194px;height:1px;background:#333"></div>
<svg style="left:2357px;top:215px" width="16" height="12"><path d="M0 1.5H15M0 6H15M0 10.5H15" stroke="#c0c0c0" stroke-width="2"/></svg>
<div class="t blu" style="left:2383px;top:215px;font-size:11.5px">-</div>
<div class="t" style="left:2392px;top:214px;font-size:12.5px;color:#b8b8b8">像素</div>
<svg style="left:2436px;top:218px" width="7" height="6"><path d="M0 0H6.5L3.25 5.5Z" fill="#9a9a9a"/></svg>
<div class="dd" style="left:2446px;top:213px;width:105px;height:18px"></div>
<div class="chev" style="left:2540px;top:216px;width:5px;height:5px"></div>
<div class="a" style="left:2357px;top:238px;width:194px;height:1px;background:#333"></div>
<svg style="left:2356px;top:244px" width="22" height="18"><path d="M3 1.5V13.5M1 3.5L3 1.5L5 3.5M1 11.5L3 13.5L5 11.5" stroke="#c0c0c0" stroke-width="1.3" fill="none"/><text x="5" y="15" font-size="18" font-weight="bold" font-family="Liberation Serif" fill="#c0c0c0">T</text></svg>
<div class="t blu" style="left:2380px;top:246px;font-size:11.5px">100</div>
<div class="t" style="left:2401px;top:246px;font-size:11.5px;color:#b8b8b8">%</div>
<svg style="left:2436px;top:249px" width="7" height="6"><path d="M0 0H6.5L3.25 5.5Z" fill="#9a9a9a"/></svg>
<svg style="left:2461px;top:244px" width="20" height="18"><text x="2" y="12.5" font-size="16" font-weight="bold" font-family="Liberation Serif" fill="#c0c0c0">T</text><path d="M1.5 15.5H16.5M3.5 13.5L1.5 15.5L3.5 17.5M14.5 13.5L16.5 15.5L14.5 17.5" stroke="#c0c0c0" stroke-width="1.2" fill="none"/></svg>
<div class="t blu" style="left:2485px;top:246px;font-size:11.5px">100</div>
<div class="t" style="left:2505px;top:246px;font-size:11.5px;color:#b8b8b8">%</div>
<svg style="left:2543px;top:249px" width="7" height="6"><path d="M0 0H6.5L3.25 5.5Z" fill="#9a9a9a"/></svg>
<svg style="left:2356px;top:266px" width="16" height="15"><path d="M0.5 9L3.5 1L6.5 9M1.5 6.5H5.5" stroke="#c0c0c0" stroke-width="1.1" fill="none"/><circle cx="9.5" cy="6.5" r="2" fill="none" stroke="#c0c0c0"/><path d="M0 11H15M12 10V15M10 12.5L12 10.5L14 12.5" stroke="#c0c0c0" stroke-width="1" fill="none"/></svg>
<div class="t blu" style="left:2381px;top:267px;font-size:11.5px">0</div>
<div class="t" style="left:2392px;top:266px;font-size:12.5px;color:#b8b8b8">像素</div>
<svg style="left:2436px;top:270px" width="7" height="6"><path d="M0 0H6.5L3.25 5.5Z" fill="#9a9a9a"/></svg>
<svg style="left:2463px;top:264px" width="17" height="18"><path d="M1 1V11M16 1V11" stroke="#c0c0c0" stroke-dasharray="1.5 1.2"/><text x="3.5" y="10" font-size="9" fill="#c0c0c0" font-family="Liberation Sans">あ</text><path d="M1 15H6M4 13L6 15L4 17M16 15H11M13 13L11 15L13 17" stroke="#c0c0c0" fill="none"/></svg>
<div class="t blu" style="left:2485px;top:267px;font-size:11.5px">0</div>
<div class="t" style="left:2496px;top:267px;font-size:11.5px;color:#b8b8b8">%</div>
<svg style="left:2543px;top:270px" width="7" height="6"><path d="M0 0H6.5L3.25 5.5Z" fill="#9a9a9a"/></svg>
<div class="a" style="left:2357px;top:289px;width:194px;height:1px;background:#333"></div>
<div class="t" style="left:2381px;top:297px;font-size:15px;color:#c0c0c0;font-family:'Liberation Serif',serif;font-weight:bold">T</div>
<div class="t" style="left:2407px;top:297px;font-size:15px;color:#c0c0c0;font-family:'Liberation Serif',serif;font-style:italic">T</div>
<div class="t" style="left:2434px;top:297px;font-size:15px;color:#c0c0c0;font-family:'Liberation Serif',serif;letter-spacing:-1px">TT</div>
<div class="t" style="left:2459px;top:297px;font-size:15px;color:#c0c0c0;font-family:'Liberation Serif',serif">T<span style="font-size:11px">T</span></div>
<div class="t" style="left:2491px;top:297px;font-size:15px;color:#c0c0c0;font-family:'Liberation Serif',serif">T<span style="font-size:8px;vertical-align:top">1</span></div>
<div class="t" style="left:2516px;top:297px;font-size:15px;color:#c0c0c0;font-family:'Liberation Serif',serif">T<span style="font-size:8px;vertical-align:-3px">1</span></div>
<div class="a" style="left:2362px;top:325px;width:13px;height:13px;border:1.5px solid #a0a0a0;border-radius:2px"></div>
<div class="t" style="left:2380px;top:324px;font-size:13px;color:#a8a8a8;letter-spacing:1px">连字</div>
<div class="a" style="left:2460px;top:325px;width:13px;height:13px;border:1.5px solid #a0a0a0;border-radius:2px"></div>
<div class="t" style="left:2478px;top:324px;font-size:13px;color:#a8a8a8">印地语数字</div>
<!-- ===== timeline ===== -->
<div class="a" style="left:0;top:855px;width:2556px;height:1px;background:#2d8ceb"></div>
<div class="pnl" style="left:0;top:856px;width:2556px;height:542px"></div>
<div class="a" style="left:2532px;top:938px;width:24px;height:443px;background:#252525"></div>
<svg style="left:10px;top:867px" width="6" height="6"><path d="M0.5 0.5L5.5 5.5M5.5 0.5L0.5 5.5" stroke="#999" stroke-width="1"/></svg>
<div class="a" style="left:25px;top:863px;width:10px;height:10px;background:#b9a47e"></div>
<div class="t" style="left:48px;top:861px;font-size:13px;color:#c4c4c4">合成1</div>
<svg style="left:91px;top:866px" width="9" height="8"><path d="M0 0.7H8M0 3.7H8M0 6.7H8" stroke="#b4b4b4" stroke-width="1.1"/></svg>
<div class="a" style="left:10px;top:879px;width:89px;height:2px;background:#c8c8c8;border-radius:1px"></div>
<div class="t" style="left:139px;top:861px;font-size:13px;color:#8c8c8c;letter-spacing:0.5px">渲染队列</div>
<div class="t" style="left:33px;top:886px;font-size:16.5px;font-weight:bold;color:#2d8ceb;font-family:'Liberation Serif',serif;letter-spacing:1.3px">00036</div>
<div class="t" style="left:10px;top:905px;font-size:9.8px;color:#2770c0">0:00:01:11 (25.00 fps)</div>
<div class="a" style="left:118px;top:890px;width:790px;height:20px;background:#161616;border:1px solid #2b2b2b;border-radius:3px"></div>
<svg style="left:125px;top:893px" width="18" height="13"><circle cx="7.5" cy="5" r="3.8" fill="none" stroke="#b0b0b0" stroke-width="1.1"/><path d="M5 7.5L0.8 11.7" stroke="#b0b0b0" stroke-width="1.2"/><path d="M11.8 7.5H16L13.9 9.5Z" fill="#b0b0b0"/></svg>
<svg style="left:924px;top:891px" width="175" height="18" fill="none" stroke="#b4b4b4" stroke-width="1.1">
<path d="M0 3.5H8M8 3.5H15M8 3.5V10.5H15" stroke-width="1.3"/><rect x="4" y="2" width="4" height="3" fill="#b4b4b4"/><rect x="11" y="2" width="5" height="3" fill="#b4b4b4"/><rect x="11" y="9" width="5" height="3" fill="#b4b4b4"/><path d="M13 14H17L15 16Z" fill="#b4b4b4" stroke="none"/>
<circle cx="37" cy="4.5" r="3" fill="#b4b4b4" stroke="none"/><path d="M37 0V9M32.5 4.5H41.5M34 1.5L40 7.5M40 1.5L34 7.5" stroke-width="0.8"/><path d="M41 7L46 9.5V15L41 17.5L36 15V9.5Z M36 9.5L41 12L46 9.5M41 12V17.5"/>
<path d="M69 13H84V9H69Z" fill="#888" stroke="none"/><path d="M70 9A6.5 6.5 0 0 1 83 9Z" fill="#b4b4b4" stroke="none"/><path d="M76.5 8V14" stroke="#232323" stroke-width="1.4"/><circle cx="74" cy="6" r="0.9" fill="#232323" stroke="none"/><circle cx="79" cy="6" r="0.9" fill="#232323" stroke="none"/>
<rect x="99" y="2" width="11" height="11" fill="#b4b4b4" stroke="none"/><rect x="101" y="4" width="7" height="7" fill="#232323" stroke="none"/><path d="M102 7.5H107" stroke-width="1"/><path d="M96.5 5V15H106" stroke-width="1.6"/>
<circle cx="132" cy="6.5" r="5.5" fill="#888" stroke="#b4b4b4"/><path d="M124 12A5.5 5.5 0 0 0 131 13M122.5 10A5.5 5.5 0 0 0 129.5 14.5"/>
<rect x="155.5" y="2.5" width="14" height="13"/><path d="M157 5C161 5 162 13 168 13"/><path d="M155 0.5V2.5M158 0.5V2.5M161 0.5V2.5M164 0.5V2.5M167 0.5V2.5M153.5 5H155.5M153.5 9H155.5M153.5 13H155.5"/>
</svg>
<div class="a" style="left:0;top:918px;width:1110px;height:1px;background:#0e0e0e"></div>
<div class="a" style="left:0;top:919px;width:1110px;height:18px;background:#303030"></div>
<div class="a" style="left:0;top:937px;width:2556px;height:1px;background:#0e0e0e"></div>
<div class="a" style="left:67px;top:922px;width:1px;height:12px;background:#151515"></div>
<div class="a" style="left:99px;top:922px;width:1px;height:12px;background:#151515"></div>
<div class="a" style="left:132px;top:922px;width:1px;height:12px;background:#151515"></div>
<div class="a" style="left:496px;top:922px;width:1px;height:12px;background:#151515"></div>
<div class="a" style="left:674px;top:922px;width:1px;height:12px;background:#151515"></div>
<div class="a" style="left:811px;top:922px;width:1px;height:12px;background:#151515"></div>
<div class="a" style="left:977px;top:922px;width:1px;height:12px;background:#151515"></div>
<div class="a" style="left:1094px;top:922px;width:1px;height:12px;background:#151515"></div>
<svg style="left:4px;top:921px" width="60" height="14">
<path d="M0.5 7C3 3 11 3 13.5 7C11 11 3 11 0.5 7Z" fill="#b4b4b4"/><circle cx="7" cy="7" r="2.2" fill="#303030"/>
<path d="M16 5H18.5L22 2V12L18.5 9H16Z" fill="#b4b4b4"/><path d="M24 4.5A3 3 0 0 1 24 9.5M25.5 3A5 5 0 0 1 25.5 11" stroke="#b4b4b4" stroke-width="1" fill="none"/>
<circle cx="36.5" cy="7.5" r="3" fill="#b4b4b4"/>
<path d="M48 6V4.5A3 3 0 0 1 54 4.5V6" stroke="#b4b4b4" stroke-width="1.4" fill="none"/><rect x="47" y="6" width="8" height="6.5" fill="#b4b4b4"/>
</svg>
<svg style="left:81px;top:921px" width="13" height="13"><path d="M0.5 1V6L7 12.5L12.5 7L6 0.5H1Z" fill="#b4b4b4"/><circle cx="3.5" cy="3.5" r="1" fill="#303030"/></svg>
<div class="t" style="left:106px;top:923px;font-size:11px;color:#9aa0b0">#</div>
<div class="t" style="left:139px;top:921px;font-size:13px;color:#c0c0c0">图层名称</div>
<div class="t" style="left:503px;top:921px;font-size:13px;color:#c0c0c0">注释</div>
<svg style="left:670px;top:918px" width="135" height="20">
<path d="M10.5 12.2A5 6.8 0 0 1 20.5 12.2Z" fill="#b4b4b4"/><circle cx="13.6" cy="8.6" r="1" fill="#303030"/><circle cx="17.8" cy="8.6" r="1" fill="#303030"/><path d="M9 12.8H13.5M17.5 12.8H22" stroke="#b4b4b4" stroke-width="1.2"/><path d="M15.5 11V15.2" stroke="#b4b4b4" stroke-width="1.6"/>
<circle cx="30.5" cy="10.5" r="1.8" fill="#b4b4b4"/><path d="M30.5 5V8M30.5 13V16M25 10.5H28M33 10.5H36M26.6 6.6L28.4 8.4M32.6 12.6L34.4 14.4M34.4 6.6L32.6 8.4M28.4 12.6L26.6 14.4" stroke="#b4b4b4" stroke-width="1"/>
<g fill="#c0c0c0"><rect x="39.8" y="4.8" width="1.8" height="1.8"/><rect x="41.9" y="6.9" width="1.8" height="1.8"/><rect x="44" y="9" width="1.8" height="1.8"/><rect x="46.1" y="11.1" width="1.8" height="1.8"/><rect x="48.2" y="13.2" width="1.8" height="1.8"/></g>
<text x="54.5" y="15.5" font-size="14" font-style="italic" font-family="Liberation Serif" fill="#b4b4b4">fx</text>
<path d="M69.7 6V15.7H80" stroke="#b4b4b4" stroke-width="1.2" fill="none"/><rect x="71.3" y="4.8" width="10" height="9" fill="#b4b4b4"/><g fill="#303030"><rect x="72.2" y="5.8" width="1" height="1"/><rect x="72.2" y="8.3" width="1" height="1"/><rect x="72.2" y="10.8" width="1" height="1"/><rect x="79.4" y="5.8" width="1" height="1"/><rect x="79.4" y="8.3" width="1" height="1"/><rect x="79.4" y="10.8" width="1" height="1"/><rect x="74.5" y="8.8" width="4" height="1.2"/></g>
<circle cx="92.3" cy="8.4" r="4.6" fill="#7a7a7a" stroke="#b4b4b4" stroke-width="1"/><path d="M87 10.5A4.6 4.6 0 0 0 92.5 14.8M85.3 12.5A4.6 4.6 0 0 0 90.8 16.8" stroke="#b4b4b4" fill="none" stroke-width="1"/>
<circle cx="105.5" cy="10.5" r="5" fill="none" stroke="#b4b4b4" stroke-width="1.2"/><path d="M109 7A5 5 0 0 1 102 14Z" fill="#b4b4b4"/>
<path d="M120.5 5L126 8V14L120.5 17L115 14V8Z M115 8L120.5 11L126 8 M120.5 11V17" fill="none" stroke="#b4b4b4" stroke-width="1.1"/>
</svg>
<div class="t" style="left:818px;top:921px;font-size:13px;color:#c0c0c0">模式</div>
<div class="t" style="left:894px;top:922px;font-size:11px;color:#8a9ab0">T</div>
<div class="t" style="left:911px;top:922px;font-size:11px;color:#a0a8b8">TrkMat</div>
<div class="t" style="left:985px;top:921px;font-size:13px;color:#c0c0c0">父级</div>
<div class="a" style="left:0;top:938px;width:1110px;height:19px;background:#303030"></div>
<div class="a" style="left:1111px;top:938px;width:1428px;height:19px;background:#3a3a3a"></div>
<div class="a" style="left:4px;top:940px;width:13px;height:15px;background:#242424"></div>
<div class="a" style="left:49px;top:940px;width:13px;height:15px;background:#242424"></div>
<svg style="left:73px;top:944px" width="7" height="8"><path d="M0 0.5H6.5L3.25 7.5Z" fill="#b0b0b0"/></svg>
<div class="a" style="left:85px;top:940px;width:15px;height:15px;background:#b5383b"></div>
<div class="t" style="left:106px;top:942px;font-size:12px;color:#c8c8c8;font-family:'Liberation Serif',serif;font-weight:bold">1</div>
<div class="a" style="left:135px;top:939px;width:17px;height:17px;background:#fff;border:1px solid #000;border-radius:2px"></div>
<div class="t" style="left:158px;top:941px;font-size:12px;color:#c0c0c0;font-family:'Liberation Serif',serif;font-weight:bold;letter-spacing:0.3px">[ “E” 轮廓]</div>
<div class="a" style="left:679px;top:939px;width:13px;height:16px;background:#262626"></div>
<svg style="left:679px;top:940px" width="14" height="14"><path d="M2 8.2A4.5 6 0 0 1 11 8.2Z" fill="#c0c0c0"/><circle cx="4.8" cy="5.2" r="0.9" fill="#262626"/><circle cx="8.3" cy="5.2" r="0.9" fill="#262626"/><path d="M0.5 9H4.5M8.5 9H12.5" stroke="#c0c0c0" stroke-width="1.2"/><path d="M6.5 7.5V11.5" stroke="#c0c0c0" stroke-width="1.6"/></svg>
<div class="a" style="left:694px;top:939px;width:13px;height:16px;background:#262626"></div>
<div class="a" style="left:709px;top:939px;width:13px;height:16px;background:#262626"></div>
<svg style="left:709px;top:940px" width="13" height="14"><path d="M1.5 12.5L11.5 1.5" stroke="#c0c0c0" stroke-width="1.3"/></svg>
<div class="a" style="left:754px;top:940px;width:13px;height:15px;background:#262626"></div>
<div class="a" style="left:769px;top:940px;width:13px;height:15px;background:#262626"></div>
<div class="a" style="left:784px;top:940px;width:13px;height:15px;background:#262626"></div>
<div class="a" style="left:815px;top:940px;width:67px;height:16px;background:#1c1c1c"></div><div class="t" style="left:822px;top:942px;font-size:13px;color:#d0d0d0">正常</div><div class="chev" style="left:868px;top:943px;width:6px;height:6px;border-color:#c0c0c0"></div>
<div class="a" style="left:889px;top:940px;width:13px;height:15px;background:#262626"></div>
<div class="a" style="left:980px;top:938px;width:17px;height:19px;background:transparent"></div>
<svg style="left:982px;top:942px" width="12" height="12"><path d="M6 6.5A1 1 0 1 1 7 5.5A2.5 2.5 0 0 1 4 8.5A3.5 3.5 0 0 1 3 3A4.5 4.5 0 0 1 10.5 6.5A5 5 0 0 1 1 8" stroke="#b0b0b0" stroke-width="1.2" fill="none"/></svg>
<div class="a" style="left:1001px;top:940px;width:89px;height:16px;background:#1c1c1c"></div><div class="t" style="left:1008px;top:942px;font-size:13px;color:#d0d0d0">无</div><div class="chev" style="left:1076px;top:943px;width:6px;height:6px;border-color:#c0c0c0"></div>
<div class="a" style="left:1118px;top:940px;width:1414px;height:16px;background:#7a3a3b"></div>
<div class="a" style="left:0;top:957px;width:2532px;height:1px;background:#1e1e1e"></div>
<div class="a" style="left:0;top:958px;width:1110px;height:19px;background:#252525"></div>
<div class="a" style="left:1117px;top:958px;width:1415px;height:19px;background:#333"></div>
<div class="a" style="left:1111px;top:958px;width:6px;height:19px;background:#262626"></div>
<svg style="left:93px;top:964px" width="7" height="8"><path d="M0 0.5H6.5L3.25 7.5Z" fill="#b0b0b0"/></svg>
<div class="t" style="left:112px;top:961px;font-size:11px;color:#b8b8b8">蒙版</div>
<div class="a" style="left:0;top:977px;width:2532px;height:1px;background:#1e1e1e"></div>
<div class="a" style="left:0;top:978px;width:1110px;height:19px;background:#252525"></div>
<div class="a" style="left:1117px;top:978px;width:1415px;height:19px;background:#333"></div>
<div class="a" style="left:1111px;top:978px;width:6px;height:19px;background:#262626"></div>
<div class="a" style="left:49px;top:980px;width:13px;height:15px;background:#1c1c1c"></div>
<svg style="left:113px;top:984px" width="7" height="8"><path d="M0 0.5H6.5L3.25 7.5Z" fill="#b0b0b0"/></svg>
<div class="a" style="left:130px;top:981px;width:11px;height:12px;background:#e8c39e"></div>
<div class="t" style="left:147px;top:983px;font-size:10px;color:#c0c0c0;font-family:'Liberation Serif',serif;font-weight:bold">E</div>
<div class="a" style="left:679px;top:979px;width:62px;height:17px;background:#1c1c1c;border:1px solid #333"></div>
<div class="t" style="left:686px;top:981px;font-size:13px;color:#d0d0d0">差值</div>
<div class="chev" style="left:727px;top:982px;width:6px;height:6px;border-color:#c0c0c0"></div>
<div class="a" style="left:748px;top:980px;width:13px;height:14px;background:#1c1c1c"></div>
<div class="t" style="left:764px;top:981px;font-size:11px;color:#b0b0b0">反转</div>
<div class="a" style="left:0;top:997px;width:2532px;height:1px;background:#1e1e1e"></div>
<div class="a" style="left:0;top:998px;width:1110px;height:19px;background:#252525"></div>
<div class="a" style="left:1117px;top:998px;width:1415px;height:19px;background:#333"></div>
<div class="a" style="left:1111px;top:998px;width:6px;height:19px;background:#262626"></div>
<div class="a" style="left:136px;top:1007px;width:1px;height:1px;background:#555"></div>
<svg style="left:150px;top:1001px" width="12" height="13"><circle cx="6" cy="7.5" r="4.8" fill="none" stroke="#c0c0c0" stroke-width="1.2"/><path d="M4.5 1H7.5M6 1V2.5M6 7.5L8 5" stroke="#c0c0c0" stroke-width="1.1"/></svg>
<div class="t" style="left:168px;top:1001px;font-size:11px;color:#b8b8b8">蒙版路径</div>
<div class="t" style="left:680px;top:1002px;font-size:11px;color:#2d8ceb">形状...</div>
<div class="a" style="left:0;top:1017px;width:2532px;height:1px;background:#1e1e1e"></div>
<div class="a" style="left:0;top:1018px;width:1110px;height:19px;background:#252525"></div>
<div class="a" style="left:1117px;top:1018px;width:1415px;height:19px;background:#333"></div>
<div class="a" style="left:1111px;top:1018px;width:6px;height:19px;background:#262626"></div>
<div class="a" style="left:136px;top:1027px;width:1px;height:1px;background:#555"></div>
<svg style="left:150px;top:1021px" width="12" height="13"><circle cx="6" cy="7.5" r="4.8" fill="none" stroke="#c0c0c0" stroke-width="1.2"/><path d="M4.5 1H7.5M6 1V2.5M6 7.5L8 5" stroke="#c0c0c0" stroke-width="1.1"/></svg>
<div class="t" style="left:168px;top:1021px;font-size:11px;color:#b8b8b8">蒙版羽化</div>
<div class="a" style="left:678px;top:1019px;width:13px;height:14px;background:#1c1c1c"></div>
<svg style="left:679px;top:1023px" width="12" height="6"><path d="M4 0.5H2.5A2 2 0 0 0 2.5 4.5H4M8 0.5H9.5A2 2 0 0 1 9.5 4.5H8M3.5 2.5H8.5" stroke="#c0c0c0" stroke-width="1" fill="none"/></svg>
<div class="t" style="left:696px;top:1023px;font-size:11px;color:#2d8ceb;letter-spacing:0.8px">0.0, 0.0</div>
<div class="t" style="left:742px;top:1022px;font-size:11px;color:#b0b0b0">像素</div>
<div class="a" style="left:0;top:1037px;width:2532px;height:1px;background:#1e1e1e"></div>
<div class="a" style="left:0;top:1038px;width:1110px;height:19px;background:#252525"></div>
<div class="a" style="left:1117px;top:1038px;width:1415px;height:19px;background:#333"></div>
<div class="a" style="left:1111px;top:1038px;width:6px;height:19px;background:#262626"></div>
<div class="a" style="left:136px;top:1047px;width:1px;height:1px;background:#555"></div>
<svg style="left:150px;top:1041px" width="12" height="13"><circle cx="6" cy="7.5" r="4.8" fill="none" stroke="#c0c0c0" stroke-width="1.2"/><path d="M4.5 1H7.5M6 1V2.5M6 7.5L8 5" stroke="#c0c0c0" stroke-width="1.1"/></svg>
<div class="t" style="left:168px;top:1041px;font-size:11px;color:#b8b8b8">蒙版不透明度</div>
<div class="t" style="left:680px;top:1043px;font-size:10.5px;color:#2d8ceb">100%</div>
<div class="a" style="left:0;top:1057px;width:2532px;height:1px;background:#1e1e1e"></div>
<div class="a" style="left:0;top:1058px;width:1110px;height:19px;background:#252525"></div>
<div class="a" style="left:1117px;top:1058px;width:1415px;height:19px;background:#333"></div>
<div class="a" style="left:1111px;top:1058px;width:6px;height:19px;background:#262626"></div>
<div class="a" style="left:136px;top:1067px;width:1px;height:1px;background:#555"></div>
<svg style="left:150px;top:1061px" width="12" height="13"><circle cx="6" cy="7.5" r="4.8" fill="none" stroke="#c0c0c0" stroke-width="1.2"/><path d="M4.5 1H7.5M6 1V2.5M6 7.5L8 5" stroke="#c0c0c0" stroke-width="1.1"/></svg>
<div class="t" style="left:168px;top:1061px;font-size:11px;color:#b8b8b8">蒙版扩展</div>
<div class="t" style="left:680px;top:1063px;font-size:11px;color:#2d8ceb;letter-spacing:0.8px">0.0</div>
<div class="t" style="left:699px;top:1062px;font-size:11px;color:#b0b0b0">像素</div>
<div class="a" style="left:0;top:1077px;width:2532px;height:1px;background:#1e1e1e"></div>
<div class="a" style="left:0;top:1078px;width:1110px;height:19px;background:#252525"></div>
<div class="a" style="left:1117px;top:1078px;width:1415px;height:19px;background:#333"></div>
<div class="a" style="left:1111px;top:1078px;width:6px;height:19px;background:#262626"></div>
<svg style="left:93px;top:1083px" width="8" height="8"><path d="M0.5 0.5L7.5 4L0.5 7.5Z" fill="#b0b0b0"/></svg>
<div class="t" style="left:112px;top:1081px;font-size:11px;color:#b8b8b8">变换</div>
<div class="t" style="left:680px;top:1082px;font-size:11px;font-weight:bold;color:#2d8ceb;text-decoration:underline">重置</div>
<div class="a" style="left:0;top:1097px;width:2532px;height:1px;background:#1e1e1e"></div>
<div class="a" style="left:0;top:1098px;width:1110px;height:19px;background:#484848"></div>
<div class="a" style="left:1111px;top:1098px;width:1428px;height:19px;background:#474747"></div>
<div class="a" style="left:4px;top:1100px;width:13px;height:15px;background:#4a4a4a"></div>
<svg style="left:4px;top:1103px" width="13" height="9"><path d="M0.5 4.5C3 1 10 1 12.5 4.5C10 8 3 8 0.5 4.5Z" fill="#c8c8c8"/><circle cx="6.5" cy="4.5" r="1.8" fill="#3c3c3c"/></svg>
<div class="a" style="left:34px;top:1100px;width:13px;height:15px;background:#333"></div>
<div class="a" style="left:49px;top:1100px;width:13px;height:15px;background:#333"></div>
<svg style="left:73px;top:1104px" width="7" height="8"><path d="M0 0.5H6.5L3.25 7.5Z" fill="#b0b0b0"/></svg>
<div class="a" style="left:85px;top:1100px;width:15px;height:15px;background:#b5383b"></div>
<div class="t" style="left:106px;top:1102px;font-size:12px;color:#c8c8c8;font-family:'Liberation Serif',serif;font-weight:bold">2</div>
<div class="a" style="left:135px;top:1099px;width:17px;height:17px;background:#fff;border:1px solid #000;border-radius:2px"></div>
<div class="a" style="left:155px;top:1098px;width:341px;height:19px;background:#414141;border:2px solid #a8a8a8"></div>
<div class="t" style="left:158px;top:1101px;font-size:12px;color:#c0c0c0;font-family:'Liberation Serif',serif;font-weight:bold;letter-spacing:0.3px">[ “K” 轮廓]</div>
<div class="a" style="left:679px;top:1099px;width:13px;height:16px;background:#262626"></div>
<svg style="left:679px;top:1100px" width="14" height="14"><path d="M2 8.2A4.5 6 0 0 1 11 8.2Z" fill="#c0c0c0"/><circle cx="4.8" cy="5.2" r="0.9" fill="#262626"/><circle cx="8.3" cy="5.2" r="0.9" fill="#262626"/><path d="M0.5 9H4.5M8.5 9H12.5" stroke="#c0c0c0" stroke-width="1.2"/><path d="M6.5 7.5V11.5" stroke="#c0c0c0" stroke-width="1.6"/></svg>
<div class="a" style="left:694px;top:1099px;width:13px;height:16px;background:#262626"></div>
<div class="a" style="left:709px;top:1099px;width:13px;height:16px;background:#262626"></div>
<svg style="left:709px;top:1100px" width="13" height="14"><path d="M1.5 12.5L11.5 1.5" stroke="#c0c0c0" stroke-width="1.3"/></svg>
<div class="a" style="left:754px;top:1100px;width:13px;height:15px;background:#262626"></div>
<div class="a" style="left:769px;top:1100px;width:13px;height:15px;background:#262626"></div>
<div class="a" style="left:784px;top:1100px;width:13px;height:15px;background:#262626"></div>
<div class="a" style="left:815px;top:1100px;width:67px;height:16px;background:#1c1c1c"></div><div class="t" style="left:822px;top:1102px;font-size:13px;color:#d0d0d0">正常</div><div class="chev" style="left:868px;top:1103px;width:6px;height:6px;border-color:#c0c0c0"></div>
<div class="a" style="left:889px;top:1100px;width:13px;height:15px;background:#262626"></div>
<div class="a" style="left:909px;top:1100px;width:62px;height:16px;background:#1c1c1c"></div><div class="t" style="left:916px;top:1102px;font-size:13px;color:#d0d0d0">无</div><div class="chev" style="left:957px;top:1103px;width:6px;height:6px;border-color:#c0c0c0"></div>
<div class="a" style="left:980px;top:1098px;width:17px;height:19px;background:#4a4a4a"></div>
<svg style="left:982px;top:1102px" width="12" height="12"><path d="M6 6.5A1 1 0 1 1 7 5.5A2.5 2.5 0 0 1 4 8.5A3.5 3.5 0 0 1 3 3A4.5 4.5 0 0 1 10.5 6.5A5 5 0 0 1 1 8" stroke="#b0b0b0" stroke-width="1.2" fill="none"/></svg>
<div class="a" style="left:1001px;top:1100px;width:89px;height:16px;background:#1c1c1c"></div><div class="t" style="left:1008px;top:1102px;font-size:13px;color:#d0d0d0">无</div><div class="chev" style="left:1076px;top:1103px;width:6px;height:6px;border-color:#c0c0c0"></div>
<div class="a" style="left:1118px;top:1100px;width:1414px;height:16px;background:#a44647;border-top:1px solid #d89a9a"></div>
<div class="a" style="left:0;top:1117px;width:2532px;height:1px;background:#1e1e1e"></div>
<div class="a" style="left:0;top:1118px;width:1110px;height:19px;background:#252525"></div>
<div class="a" style="left:1117px;top:1118px;width:1415px;height:19px;background:#333"></div>
<div class="a" style="left:1111px;top:1118px;width:6px;height:19px;background:#262626"></div>
<svg style="left:93px;top:1124px" width="7" height="8"><path d="M0 0.5H6.5L3.25 7.5Z" fill="#b0b0b0"/></svg>
<div class="t" style="left:112px;top:1121px;font-size:11px;color:#b8b8b8">蒙版</div>
<div class="a" style="left:0;top:1137px;width:2532px;height:1px;background:#1e1e1e"></div>
<div class="a" style="left:0;top:1138px;width:1110px;height:19px;background:#252525"></div>
<div class="a" style="left:1117px;top:1138px;width:1415px;height:19px;background:#333"></div>
<div class="a" style="left:1111px;top:1138px;width:6px;height:19px;background:#262626"></div>
<div class="a" style="left:49px;top:1140px;width:13px;height:15px;background:#1c1c1c"></div>
<svg style="left:113px;top:1144px" width="7" height="8"><path d="M0 0.5H6.5L3.25 7.5Z" fill="#b0b0b0"/></svg>
<div class="a" style="left:130px;top:1141px;width:11px;height:12px;background:#b9d3b9"></div>
<div class="a" style="left:145px;top:1138px;width:352px;height:19px;background:#4b4b4b"></div>
<div class="t" style="left:147px;top:1143px;font-size:10px;color:#c0c0c0;font-family:'Liberation Serif',serif;font-weight:bold">K</div>
<div class="a" style="left:679px;top:1139px;width:62px;height:17px;background:#1c1c1c;border:1px solid #333"></div>
<div class="t" style="left:686px;top:1141px;font-size:13px;color:#d0d0d0">差值</div>
<div class="chev" style="left:727px;top:1142px;width:6px;height:6px;border-color:#c0c0c0"></div>
<div class="a" style="left:748px;top:1140px;width:13px;height:14px;background:#1c1c1c"></div>
<div class="t" style="left:764px;top:1141px;font-size:11px;color:#b0b0b0">反转</div>
<div class="a" style="left:0;top:1157px;width:2532px;height:1px;background:#1e1e1e"></div>
<div class="a" style="left:0;top:1158px;width:1110px;height:19px;background:#252525"></div>
<div class="a" style="left:1117px;top:1158px;width:1415px;height:19px;background:#333"></div>
<div class="a" style="left:1111px;top:1158px;width:6px;height:19px;background:#262626"></div>
<div class="a" style="left:136px;top:1167px;width:1px;height:1px;background:#555"></div>
<div class="a" style="left:148px;top:1158px;width:16px;height:19px;background:#1e1e1e;border:1px solid #333"></div>
<svg style="left:150px;top:1161px" width="12" height="13"><circle cx="6" cy="7.5" r="4.8" fill="none" stroke="#2d8ceb" stroke-width="1.3"/><path d="M4.5 1H7.5M6 1V2.5M6 7.5L8 5" stroke="#2d8ceb" stroke-width="1.2"/></svg>
<svg style="left:168px;top:1162px" width="12" height="11"><path d="M0.5 0V10.5H12" stroke="#c0c0c0" stroke-width="1"/><path d="M2 8L5 4L7 7L10 2.5" stroke="#c0c0c0" stroke-width="1" fill="none"/></svg>
<div class="a" style="left:184px;top:1158px;width:313px;height:19px;background:#4b4b4b"></div>
<div class="t" style="left:188px;top:1161px;font-size:11px;color:#c0c0c0">蒙版路径</div>
<svg style="left:6px;top:1162px" width="40" height="10"><path d="M6.5 0.5V9.5L1 5Z" fill="#c0c0c0"/><path d="M25.5 1L29.5 5L25.5 9L21.5 5Z" fill="none" stroke="#c0c0c0" stroke-width="1"/><path d="M37.5 0.5V9.5L43 5Z" fill="#c0c0c0"/></svg>
<div class="t" style="left:680px;top:1162px;font-size:11px;color:#2d8ceb">形状...</div>
<svg style="left:1113px;top:1162px" width="12" height="11"><path d="M5.5 0.5L10.5 5.5L5.5 10.5L0.5 5.5Z" fill="#a0a0a0"/><path d="M5.5 0.5L10.5 5.5L5.5 10.5Z" fill="#c8c8c8"/></svg>
<svg style="left:1447px;top:1162px" width="12" height="11"><path d="M5.5 0.5L10.5 5.5L5.5 10.5L0.5 5.5Z" fill="#1f6fc8"/><path d="M5.5 0.5L10.5 5.5L5.5 10.5Z" fill="#2d8ceb"/></svg>
<div class="a" style="left:0;top:1177px;width:2532px;height:1px;background:#1e1e1e"></div>
<div class="a" style="left:0;top:1178px;width:1110px;height:19px;background:#252525"></div>
<div class="a" style="left:1117px;top:1178px;width:1415px;height:19px;background:#333"></div>
<div class="a" style="left:1111px;top:1178px;width:6px;height:19px;background:#262626"></div>
<div class="a" style="left:136px;top:1187px;width:1px;height:1px;background:#555"></div>
<svg style="left:150px;top:1181px" width="12" height="13"><circle cx="6" cy="7.5" r="4.8" fill="none" stroke="#c0c0c0" stroke-width="1.2"/><path d="M4.5 1H7.5M6 1V2.5M6 7.5L8 5" stroke="#c0c0c0" stroke-width="1.1"/></svg>
<div class="t" style="left:168px;top:1181px;font-size:11px;color:#b8b8b8">蒙版羽化</div>
<div class="a" style="left:678px;top:1179px;width:13px;height:14px;background:#1c1c1c"></div>
<svg style="left:679px;top:1183px" width="12" height="6"><path d="M4 0.5H2.5A2 2 0 0 0 2.5 4.5H4M8 0.5H9.5A2 2 0 0 1 9.5 4.5H8M3.5 2.5H8.5" stroke="#c0c0c0" stroke-width="1" fill="none"/></svg>
<div class="t" style="left:696px;top:1183px;font-size:11px;color:#2d8ceb;letter-spacing:0.8px">0.0, 0.0</div>
<div class="t" style="left:742px;top:1182px;font-size:11px;color:#b0b0b0">像素</div>
<div class="a" style="left:0;top:1197px;width:2532px;height:1px;background:#1e1e1e"></div>
<div class="a" style="left:0;top:1198px;width:1110px;height:19px;background:#252525"></div>
<div class="a" style="left:1117px;top:1198px;width:1415px;height:19px;background:#333"></div>
<div class="a" style="left:1111px;top:1198px;width:6px;height:19px;background:#262626"></div>
<div class="a" style="left:136px;top:1207px;width:1px;height:1px;background:#555"></div>
<svg style="left:150px;top:1201px" width="12" height="13"><circle cx="6" cy="7.5" r="4.8" fill="none" stroke="#c0c0c0" stroke-width="1.2"/><path d="M4.5 1H7.5M6 1V2.5M6 7.5L8 5" stroke="#c0c0c0" stroke-width="1.1"/></svg>
<div class="t" style="left:168px;top:1201px;font-size:11px;color:#b8b8b8">蒙版不透明度</div>
<div class="t" style="left:680px;top:1203px;font-size:10.5px;color:#2d8ceb">100%</div>
<div class="a" style="left:0;top:1217px;width:2532px;height:1px;background:#1e1e1e"></div>
<div class="a" style="left:0;top:1218px;width:1110px;height:19px;background:#252525"></div>
<div class="a" style="left:1117px;top:1218px;width:1415px;height:19px;background:#333"></div>
<div class="a" style="left:1111px;top:1218px;width:6px;height:19px;background:#262626"></div>
<div class="a" style="left:136px;top:1227px;width:1px;height:1px;background:#555"></div>
<svg style="left:150px;top:1221px" width="12" height="13"><circle cx="6" cy="7.5" r="4.8" fill="none" stroke="#c0c0c0" stroke-width="1.2"/><path d="M4.5 1H7.5M6 1V2.5M6 7.5L8 5" stroke="#c0c0c0" stroke-width="1.1"/></svg>
<div class="t" style="left:168px;top:1221px;font-size:11px;color:#b8b8b8">蒙版扩展</div>
<div class="t" style="left:680px;top:1223px;font-size:11px;color:#2d8ceb;letter-spacing:0.8px">0.0</div>
<div class="t" style="left:699px;top:1222px;font-size:11px;color:#b0b0b0">像素</div>
<div class="a" style="left:0;top:1237px;width:2532px;height:1px;background:#1e1e1e"></div>
<div class="a" style="left:0;top:1238px;width:1110px;height:19px;background:#252525"></div>
<div class="a" style="left:1117px;top:1238px;width:1415px;height:19px;background:#333"></div>
<div class="a" style="left:1111px;top:1238px;width:6px;height:19px;background:#262626"></div>
<svg style="left:93px;top:1243px" width="8" height="8"><path d="M0.5 0.5L7.5 4L0.5 7.5Z" fill="#b0b0b0"/></svg>
<div class="t" style="left:112px;top:1241px;font-size:11px;color:#b8b8b8">变换</div>
<div class="t" style="left:680px;top:1242px;font-size:11px;font-weight:bold;color:#2d8ceb;text-decoration:underline">重置</div>
<div class="a" style="left:0;top:1257px;width:2532px;height:1px;background:#1e1e1e"></div>
<div class="a" style="left:0;top:1258px;width:1110px;height:19px;background:#303030"></div>
<div class="a" style="left:1111px;top:1258px;width:1428px;height:19px;background:#3a3a3a"></div>
<div class="a" style="left:4px;top:1260px;width:13px;height:15px;background:#242424"></div>
<div class="a" style="left:49px;top:1260px;width:13px;height:15px;background:#242424"></div>
<svg style="left:72px;top:1264px" width="9" height="8"><path d="M0.5 0.5L8 4L0.5 7.5Z" fill="#b0b0b0"/></svg>
<div class="a" style="left:85px;top:1260px;width:15px;height:15px;background:#b5383b"></div>
<div class="t" style="left:106px;top:1262px;font-size:12px;color:#c8c8c8;font-family:'Liberation Serif',serif;font-weight:bold">3</div>
<div class="t" style="left:139px;top:1261px;font-size:14px;color:#c8c8c8;font-family:'Liberation Serif',serif;font-weight:bold">T</div>
<div class="t" style="left:157px;top:1265px;font-size:10px;color:#c0c0c0;font-family:'Liberation Serif',serif;font-weight:bold">E</div>
<div class="a" style="left:679px;top:1259px;width:13px;height:16px;background:#262626"></div>
<svg style="left:679px;top:1260px" width="14" height="14"><path d="M2 8.2A4.5 6 0 0 1 11 8.2Z" fill="#c0c0c0"/><circle cx="4.8" cy="5.2" r="0.9" fill="#262626"/><circle cx="8.3" cy="5.2" r="0.9" fill="#262626"/><path d="M0.5 9H4.5M8.5 9H12.5" stroke="#c0c0c0" stroke-width="1.2"/><path d="M6.5 7.5V11.5" stroke="#c0c0c0" stroke-width="1.6"/></svg>
<div class="a" style="left:694px;top:1259px;width:13px;height:16px;background:#262626"></div>
<svg style="left:695px;top:1261px" width="11" height="11"><circle cx="5.5" cy="5.5" r="2.3" fill="none" stroke="#909090"/><path d="M5.5 0.5V2.5M5.5 8.5V10.5M0.5 5.5H2.5M8.5 5.5H10.5M2 2L3.4 3.4M7.6 7.6L9 9M9 2L7.6 3.4M3.4 7.6L2 9" stroke="#909090" stroke-width="0.9"/></svg>
<div class="a" style="left:709px;top:1259px;width:13px;height:16px;background:#262626"></div>
<svg style="left:709px;top:1260px" width="13" height="14"><path d="M1.5 12.5L11.5 1.5" stroke="#c0c0c0" stroke-width="1.3"/></svg>
<div class="a" style="left:754px;top:1260px;width:13px;height:15px;background:#262626"></div>
<div class="a" style="left:769px;top:1260px;width:13px;height:15px;background:#262626"></div>
<div class="a" style="left:784px;top:1260px;width:13px;height:15px;background:#262626"></div>
<div class="a" style="left:815px;top:1260px;width:67px;height:16px;background:#1c1c1c"></div><div class="t" style="left:822px;top:1262px;font-size:13px;color:#d0d0d0">正常</div><div class="chev" style="left:868px;top:1263px;width:6px;height:6px;border-color:#c0c0c0"></div>
<div class="a" style="left:889px;top:1260px;width:13px;height:15px;background:#262626"></div>
<div class="a" style="left:909px;top:1260px;width:62px;height:16px;background:#1c1c1c"></div><div class="t" style="left:916px;top:1262px;font-size:13px;color:#d0d0d0">无</div><div class="chev" style="left:957px;top:1263px;width:6px;height:6px;border-color:#c0c0c0"></div>
<div class="a" style="left:980px;top:1258px;width:17px;height:19px;background:transparent"></div>
<svg style="left:982px;top:1262px" width="12" height="12"><path d="M6 6.5A1 1 0 1 1 7 5.5A2.5 2.5 0 0 1 4 8.5A3.5 3.5 0 0 1 3 3A4.5 4.5 0 0 1 10.5 6.5A5 5 0 0 1 1 8" stroke="#b0b0b0" stroke-width="1.2" fill="none"/></svg>
<div class="a" style="left:1001px;top:1260px;width:89px;height:16px;background:#1c1c1c"></div><div class="t" style="left:1008px;top:1262px;font-size:13px;color:#d0d0d0">无</div><div class="chev" style="left:1076px;top:1263px;width:6px;height:6px;border-color:#c0c0c0"></div>
<div class="a" style="left:1118px;top:1260px;width:1414px;height:16px;background:#7a3a3b"></div>
<div class="a" style="left:0;top:1277px;width:2532px;height:1px;background:#1e1e1e"></div>
<div class="a" style="left:0;top:1278px;width:1110px;height:19px;background:#303030"></div>
<div class="a" style="left:1111px;top:1278px;width:1428px;height:19px;background:#3a3a3a"></div>
<div class="a" style="left:4px;top:1280px;width:13px;height:15px;background:#242424"></div>
<div class="a" style="left:49px;top:1280px;width:13px;height:15px;background:#242424"></div>
<svg style="left:72px;top:1284px" width="9" height="8"><path d="M0.5 0.5L8 4L0.5 7.5Z" fill="#b0b0b0"/></svg>
<div class="a" style="left:85px;top:1280px;width:15px;height:15px;background:#b5383b"></div>
<div class="t" style="left:106px;top:1282px;font-size:12px;color:#c8c8c8;font-family:'Liberation Serif',serif;font-weight:bold">4</div>
<div class="t" style="left:139px;top:1281px;font-size:14px;color:#c8c8c8;font-family:'Liberation Serif',serif;font-weight:bold">T</div>
<div class="t" style="left:157px;top:1285px;font-size:10px;color:#c0c0c0;font-family:'Liberation Serif',serif;font-weight:bold">K</div>
<div class="a" style="left:679px;top:1279px;width:13px;height:16px;background:#262626"></div>
<svg style="left:679px;top:1280px" width="14" height="14"><path d="M2 8.2A4.5 6 0 0 1 11 8.2Z" fill="#c0c0c0"/><circle cx="4.8" cy="5.2" r="0.9" fill="#262626"/><circle cx="8.3" cy="5.2" r="0.9" fill="#262626"/><path d="M0.5 9H4.5M8.5 9H12.5" stroke="#c0c0c0" stroke-width="1.2"/><path d="M6.5 7.5V11.5" stroke="#c0c0c0" stroke-width="1.6"/></svg>
<div class="a" style="left:694px;top:1279px;width:13px;height:16px;background:#262626"></div>
<svg style="left:695px;top:1281px" width="11" height="11"><circle cx="5.5" cy="5.5" r="2.3" fill="none" stroke="#909090"/><path d="M5.5 0.5V2.5M5.5 8.5V10.5M0.5 5.5H2.5M8.5 5.5H10.5M2 2L3.4 3.4M7.6 7.6L9 9M9 2L7.6 3.4M3.4 7.6L2 9" stroke="#909090" stroke-width="0.9"/></svg>
<div class="a" style="left:709px;top:1279px;width:13px;height:16px;background:#262626"></div>
<svg style="left:709px;top:1280px" width="13" height="14"><path d="M1.5 12.5L11.5 1.5" stroke="#c0c0c0" stroke-width="1.3"/></svg>
<div class="a" style="left:754px;top:1280px;width:13px;height:15px;background:#262626"></div>
<div class="a" style="left:769px;top:1280px;width:13px;height:15px;background:#262626"></div>
<div class="a" style="left:784px;top:1280px;width:13px;height:15px;background:#262626"></div>
<div class="a" style="left:815px;top:1280px;width:67px;height:16px;background:#1c1c1c"></div><div class="t" style="left:822px;top:1282px;font-size:13px;color:#d0d0d0">正常</div><div class="chev" style="left:868px;top:1283px;width:6px;height:6px;border-color:#c0c0c0"></div>
<div class="a" style="left:889px;top:1280px;width:13px;height:15px;background:#262626"></div>
<div class="a" style="left:909px;top:1280px;width:62px;height:16px;background:#1c1c1c"></div><div class="t" style="left:916px;top:1282px;font-size:13px;color:#d0d0d0">无</div><div class="chev" style="left:957px;top:1283px;width:6px;height:6px;border-color:#c0c0c0"></div>
<div class="a" style="left:980px;top:1278px;width:17px;height:19px;background:transparent"></div>
<svg style="left:982px;top:1282px" width="12" height="12"><path d="M6 6.5A1 1 0 1 1 7 5.5A2.5 2.5 0 0 1 4 8.5A3.5 3.5 0 0 1 3 3A4.5 4.5 0 0 1 10.5 6.5A5 5 0 0 1 1 8" stroke="#b0b0b0" stroke-width="1.2" fill="none"/></svg>
<div class="a" style="left:1001px;top:1280px;width:89px;height:16px;background:#1c1c1c"></div><div class="t" style="left:1008px;top:1282px;font-size:13px;color:#d0d0d0">无</div><div class="chev" style="left:1076px;top:1283px;width:6px;height:6px;border-color:#c0c0c0"></div>
<div class="a" style="left:1118px;top:1280px;width:1414px;height:16px;background:#7a3a3b"></div>
<div class="a" style="left:0;top:1297px;width:2532px;height:1px;background:#1e1e1e"></div>
<div class="a" style="left:1117px;top:1298px;width:1415px;height:83px;background:#323232"></div>
<div class="a" style="left:1111px;top:1298px;width:6px;height:83px;background:#262626"></div>
<div class="a" style="left:1110px;top:918px;width:1px;height:463px;background:#000"></div>
<div class="a" style="left:1111px;top:937px;width:6px;height:444px;background:#262626;mix-blend-mode:normal;opacity:0"></div>
<div class="a" style="left:2532px;top:918px;width:24px;height:20px;background:#232323"></div>
<svg style="left:2539px;top:921px" width="14" height="13"><path d="M0.5 0.5H13V8L6.75 12.5L0.5 8Z" fill="#b4b4b4"/></svg>
<div class="a" style="left:2538px;top:937px;width:18px;height:1px;background:#0e0e0e"></div>
<svg style="left:2539px;top:940px" width="16" height="15"><path d="M1 8L6 3V6H15V11H6Z" fill="none" stroke="#b4b4b4" stroke-width="1.2"/><circle cx="5" cy="10" r="2.5" fill="#232323" stroke="#b4b4b4" stroke-width="1.2"/></svg>
<div class="a" style="left:2538px;top:938px;width:1px;height:20px;background:#111"></div>
<div class="a" style="left:1111px;top:888px;width:1427px;height:10px;background:#0e0e0e"></div>
<div class="a" style="left:1117px;top:889px;width:1415px;height:8px;background:#6b6b6b"></div>
<div class="a" style="left:1111px;top:889px;width:7px;height:8px;background:#2d8ceb;border-radius:4px 0 0 4px"></div>
<div class="a" style="left:2532px;top:889px;width:6px;height:8px;background:#2d8ceb;border-radius:0 4px 4px 0"></div>
<div class="a" style="left:1322px;top:889px;width:1px;height:8px;background:#7ab8f0"></div>
<div class="a" style="left:1111px;top:898px;width:1427px;height:20px;background:#232323"></div>
<div class="a" style="left:1118.0px;top:913px;width:1px;height:5px;background:#9a9a9a"></div>
<div class="t" style="left:1110px;top:900px;width:22px;overflow:hidden;font-size:10px;color:#a8a8a8;direction:rtl">00000</div>
<div class="a" style="left:1174.5px;top:913px;width:1px;height:5px;background:#9a9a9a"></div>
<div class="t" style="left:1159.0px;top:900px;width:30px;text-align:center;font-size:10px;color:#a8a8a8">00010</div>
<div class="a" style="left:1231.1px;top:913px;width:1px;height:5px;background:#9a9a9a"></div>
<div class="t" style="left:1215.6px;top:900px;width:30px;text-align:center;font-size:10px;color:#a8a8a8">00020</div>
<div class="a" style="left:1287.6px;top:913px;width:1px;height:5px;background:#9a9a9a"></div>
<div class="t" style="left:1272.1px;top:900px;width:30px;text-align:center;font-size:10px;color:#a8a8a8">00030</div>
<div class="a" style="left:1344.2px;top:913px;width:1px;height:5px;background:#9a9a9a"></div>
<div class="t" style="left:1328.7px;top:900px;width:30px;text-align:center;font-size:10px;color:#a8a8a8">00040</div>
<div class="a" style="left:1400.7px;top:913px;width:1px;height:5px;background:#9a9a9a"></div>
<div class="t" style="left:1385.2px;top:900px;width:30px;text-align:center;font-size:10px;color:#a8a8a8">00050</div>
<div class="a" style="left:1457.2px;top:913px;width:1px;height:5px;background:#9a9a9a"></div>
<div class="t" style="left:1441.7px;top:900px;width:30px;text-align:center;font-size:10px;color:#a8a8a8">00060</div>
<div class="a" style="left:1513.8px;top:913px;width:1px;height:5px;background:#9a9a9a"></div>
<div class="t" style="left:1498.3px;top:900px;width:30px;text-align:center;font-size:10px;color:#a8a8a8">00070</div>
<div class="a" style="left:1570.3px;top:913px;width:1px;height:5px;background:#9a9a9a"></div>
<div class="t" style="left:1554.8px;top:900px;width:30px;text-align:center;font-size:10px;color:#a8a8a8">00080</div>
<div class="a" style="left:1626.9px;top:913px;width:1px;height:5px;background:#9a9a9a"></div>
<div class="t" style="left:1611.4px;top:900px;width:30px;text-align:center;font-size:10px;color:#a8a8a8">00090</div>
<div class="a" style="left:1683.4px;top:913px;width:1px;height:5px;background:#9a9a9a"></div>
<div class="t" style="left:1667.9px;top:900px;width:30px;text-align:center;font-size:10px;color:#a8a8a8">00100</div>
<div class="a" style="left:1739.9px;top:913px;width:1px;height:5px;background:#9a9a9a"></div>
<div class="t" style="left:1724.4px;top:900px;width:30px;text-align:center;font-size:10px;color:#a8a8a8">00110</div>
<div class="a" style="left:1796.5px;top:913px;width:1px;height:5px;background:#9a9a9a"></div>
<div class="t" style="left:1781.0px;top:900px;width:30px;text-align:center;font-size:10px;color:#a8a8a8">00120</div>
<div class="a" style="left:1853.0px;top:913px;width:1px;height:5px;background:#9a9a9a"></div>
<div class="t" style="left:1837.5px;top:900px;width:30px;text-align:center;font-size:10px;color:#a8a8a8">00130</div>
<div class="a" style="left:1909.6px;top:913px;width:1px;height:5px;background:#9a9a9a"></div>
<div class="t" style="left:1894.1px;top:900px;width:30px;text-align:center;font-size:10px;color:#a8a8a8">00140</div>
<div class="a" style="left:1966.1px;top:913px;width:1px;height:5px;background:#9a9a9a"></div>
<div class="t" style="left:1950.6px;top:900px;width:30px;text-align:center;font-size:10px;color:#a8a8a8">00150</div>
<div class="a" style="left:2022.6px;top:913px;width:1px;height:5px;background:#9a9a9a"></div>
<div class="t" style="left:2007.1px;top:900px;width:30px;text-align:center;font-size:10px;color:#a8a8a8">00160</div>
<div class="a" style="left:2079.2px;top:913px;width:1px;height:5px;background:#9a9a9a"></div>
<div class="t" style="left:2063.7px;top:900px;width:30px;text-align:center;font-size:10px;color:#a8a8a8">00170</div>
<div class="a" style="left:2135.7px;top:913px;width:1px;height:5px;background:#9a9a9a"></div>
<div class="t" style="left:2120.2px;top:900px;width:30px;text-align:center;font-size:10px;color:#a8a8a8">00180</div>
<div class="a" style="left:2192.3px;top:913px;width:1px;height:5px;background:#9a9a9a"></div>
<div class="t" style="left:2176.8px;top:900px;width:30px;text-align:center;font-size:10px;color:#a8a8a8">00190</div>
<div class="a" style="left:2248.8px;top:913px;width:1px;height:5px;background:#9a9a9a"></div>
<div class="t" style="left:2233.3px;top:900px;width:30px;text-align:center;font-size:10px;color:#a8a8a8">00200</div>
<div class="a" style="left:2305.3px;top:913px;width:1px;height:5px;background:#9a9a9a"></div>
<div class="t" style="left:2289.8px;top:900px;width:30px;text-align:center;font-size:10px;color:#a8a8a8">00210</div>
<div class="a" style="left:2361.9px;top:913px;width:1px;height:5px;background:#9a9a9a"></div>
<div class="t" style="left:2346.4px;top:900px;width:30px;text-align:center;font-size:10px;color:#a8a8a8">00220</div>
<div class="a" style="left:2418.4px;top:913px;width:1px;height:5px;background:#9a9a9a"></div>
<div class="t" style="left:2402.9px;top:900px;width:30px;text-align:center;font-size:10px;color:#a8a8a8">00230</div>
<div class="a" style="left:2475.0px;top:913px;width:1px;height:5px;background:#9a9a9a"></div>
<div class="t" style="left:2459.5px;top:900px;width:30px;text-align:center;font-size:10px;color:#a8a8a8">00240</div>
<div class="a" style="left:2531.5px;top:913px;width:1px;height:5px;background:#9a9a9a"></div>
<div class="t" style="left:2519.0px;top:900px;width:20px;overflow:hidden;font-size:10px;color:#a8a8a8">00250</div>
<div class="a" style="left:1111px;top:918px;width:1427px;height:19px;background:#0e0e0e"></div>
<div class="a" style="left:1117px;top:919px;width:1415px;height:14px;background:#636363"></div>
<div class="a" style="left:1112px;top:919px;width:6px;height:14px;background:#2d8ceb;border-radius:4px 0 0 4px"></div>
<div class="a" style="left:2532px;top:919px;width:6px;height:14px;background:#2d8ceb;border-radius:0 4px 4px 0"></div>
<div class="a" style="left:1111px;top:934px;width:1421px;height:3px;background:#262626"></div>
<div class="a" style="left:1118.0px;top:934px;width:10.6px;height:3px;background:#16c41f"></div>
<div class="a" style="left:1135.0px;top:934px;width:10.8px;height:3px;background:#16c41f"></div>
<div class="a" style="left:1157.5px;top:934px;width:5.5px;height:3px;background:#16c41f"></div>
<div class="a" style="left:1169.0px;top:934px;width:5.6px;height:3px;background:#16c41f"></div>
<div class="a" style="left:1186.0px;top:934px;width:5.5px;height:3px;background:#16c41f"></div>
<div class="a" style="left:1203.0px;top:934px;width:5.0px;height:3px;background:#16c41f"></div>
<div class="a" style="left:1214.0px;top:934px;width:5.7px;height:3px;background:#16c41f"></div>
<div class="a" style="left:1225.6px;top:934px;width:5.2px;height:3px;background:#16c41f"></div>
<div class="a" style="left:1237.0px;top:934px;width:5.0px;height:3px;background:#16c41f"></div>
<div class="a" style="left:1248.5px;top:934px;width:5.3px;height:3px;background:#16c41f"></div>
<div class="a" style="left:1259.0px;top:934px;width:67.5px;height:3px;background:#16c41f"></div>
<div class="a" style="left:1452.0px;top:934px;width:1080.0px;height:3px;background:#16c41f"></div>
<div class="a" style="left:1322px;top:905px;width:1px;height:476px;background:#2d8ceb"></div>
<svg style="left:1316.5px;top:903px" width="12" height="14"><path d="M0 0H11.5V6.5L5.75 13.5L0 6.5Z" fill="#2d8ceb"/><path d="M4.5 6.5H7M5.75 6.5V12" stroke="#1a3a60" stroke-width="1"/></svg>
<svg style="left:1318px;top:961px" width="9" height="13"><path d="M1 1H8M1 11H8" stroke="#c0c0c0" stroke-width="1.3"/><path d="M4.5 1V11" stroke="#c0c0c0" stroke-width="2"/></svg>
<svg style="left:1318px;top:981px" width="9" height="13"><path d="M1 1H8M1 11H8" stroke="#c0c0c0" stroke-width="1.3"/><path d="M4.5 1V11" stroke="#c0c0c0" stroke-width="2"/></svg>
<svg style="left:1318px;top:1001px" width="9" height="13"><path d="M1 1H8M1 11H8" stroke="#c0c0c0" stroke-width="1.3"/><path d="M4.5 1V11" stroke="#c0c0c0" stroke-width="2"/></svg>
<svg style="left:1318px;top:1021px" width="9" height="13"><path d="M1 1H8M1 11H8" stroke="#c0c0c0" stroke-width="1.3"/><path d="M4.5 1V11" stroke="#c0c0c0" stroke-width="2"/></svg>
<svg style="left:1318px;top:1041px" width="9" height="13"><path d="M1 1H8M1 11H8" stroke="#c0c0c0" stroke-width="1.3"/><path d="M4.5 1V11" stroke="#c0c0c0" stroke-width="2"/></svg>
<svg style="left:1318px;top:1061px" width="9" height="13"><path d="M1 1H8M1 11H8" stroke="#c0c0c0" stroke-width="1.3"/><path d="M4.5 1V11" stroke="#c0c0c0" stroke-width="2"/></svg>
<svg style="left:1318px;top:1081px" width="9" height="13"><path d="M1 1H8M1 11H8" stroke="#c0c0c0" stroke-width="1.3"/><path d="M4.5 1V11" stroke="#c0c0c0" stroke-width="2"/></svg>
<svg style="left:1318px;top:1121px" width="9" height="13"><path d="M1 1H8M1 11H8" stroke="#c0c0c0" stroke-width="1.3"/><path d="M4.5 1V11" stroke="#c0c0c0" stroke-width="2"/></svg>
<svg style="left:1318px;top:1141px" width="9" height="13"><path d="M1 1H8M1 11H8" stroke="#c0c0c0" stroke-width="1.3"/><path d="M4.5 1V11" stroke="#c0c0c0" stroke-width="2"/></svg>
<svg style="left:1318px;top:1181px" width="9" height="13"><path d="M1 1H8M1 11H8" stroke="#c0c0c0" stroke-width="1.3"/><path d="M4.5 1V11" stroke="#c0c0c0" stroke-width="2"/></svg>
<svg style="left:1318px;top:1201px" width="9" height="13"><path d="M1 1H8M1 11H8" stroke="#c0c0c0" stroke-width="1.3"/><path d="M4.5 1V11" stroke="#c0c0c0" stroke-width="2"/></svg>
<svg style="left:1318px;top:1221px" width="9" height="13"><path d="M1 1H8M1 11H8" stroke="#c0c0c0" stroke-width="1.3"/><path d="M4.5 1V11" stroke="#c0c0c0" stroke-width="2"/></svg>
<svg style="left:1318px;top:1241px" width="9" height="13"><path d="M1 1H8M1 11H8" stroke="#c0c0c0" stroke-width="1.3"/><path d="M4.5 1V11" stroke="#c0c0c0" stroke-width="2"/></svg>
<div class="a" style="left:0;top:1381px;width:1218px;height:1px;background:#000"></div>
<div class="a" style="left:0;top:1382px;width:2556px;height:16px;background:#222"></div>
<svg style="left:3px;top:1383px" width="55" height="14"><rect x="0.5" y="0.5" width="14" height="13" fill="#1c1c1c"/><rect x="3" y="3" width="7" height="7" fill="none" stroke="#2d8ceb" stroke-width="1.1"/><rect x="5.5" y="5.5" width="7" height="7" fill="none" stroke="#2d8ceb" stroke-width="1.1"/><rect x="19.5" y="0.5" width="14" height="13" fill="#1c1c1c"/><circle cx="25" cy="6" r="3.5" fill="none" stroke="#2d8ceb" stroke-width="1.1"/><rect x="26" y="7" width="5" height="5" fill="none" stroke="#2d8ceb" stroke-width="1.1"/><path d="M41 3L44 0.5L47 3V11L44 13.5L41 11Z" fill="#a0a0a0"/></svg>
<svg style="left:1115px;top:1385px" width="100" height="12"><path d="M1 6L4 3L6 4.5L8 2L11 6Z" fill="#b4b4b4"/><circle cx="27" cy="6" r="4.3" fill="none" stroke="#a0a0a0" stroke-width="1.4"/><path d="M32 4.5H70" stroke="#3c3c3c" stroke-width="2"/><path d="M82 11L87 5L88.5 6.5L85 11Z M86 11L91.5 2.5L98 11Z" fill="#b4b4b4"/></svg>
<div class="a" style="left:2050px;top:1125px;width:57px;height:28px;background:#fff;border:1.5px solid #2d8ceb;border-radius:0 14px 14px 0;border-left:none"></div>
<div class="t" style="left:2082px;top:1133px;font-size:13px;color:#2d8ceb;font-weight:bold">英</div>
<div class="a" style="left:2026px;top:1103px;width:50px;height:50px;background:#fff;border:2px solid #2d8ceb;border-radius:50%"></div>
<div class="a" style="left:2029px;top:1106px;width:44px;height:44px;border:2px solid #222;border-radius:50%"></div>
<svg style="left:2036px;top:1110px" width="31" height="36"><g stroke="#111" stroke-width="1.5" fill="none" stroke-linecap="round"><path d="M13.5 13Q9 10.5 6.5 4.5L6 0.8M8 7.8L3 8.3M10 10.3L11.2 5.8"/><path d="M17.5 13Q22 10.5 24.5 4.5L25 0.8M23 7.8L28 8.3M21 10.3L19.8 5.8"/></g><ellipse cx="15.5" cy="17.5" rx="3.7" ry="5.6" fill="#111"/><text x="6" y="32" font-size="7" fill="#222" font-family="Liberation Serif" font-weight="bold">野鹿志</text></svg>
<svg style="left:0;top:0" width="2556" height="1398"><g stroke="#e8222a" stroke-width="3.4" stroke-linecap="round" fill="#e8222a"><path d="M387 969.4L312 997" /><path d="M303.3 1001.5L316 987.6L322 1003Z" stroke-width="1"/><path d="M443.5 1121L354 1145" /><path d="M345.6 1147.5L359.6 1135.5L363.8 1151Z" stroke-width="1"/><path d="M399 1268L329 1210" /><path d="M321.9 1203.6L340 1208.5L330.4 1221.5Z" stroke-width="1"/></g></svg>
<div class="t" style="left:432px;top:961px;font-size:26px;font-weight:bold;color:#e8222a">2.康秋C复制</div>
<div class="t" style="left:440px;top:1150px;font-size:26px;font-weight:bold;color:#e8222a">1.K帧</div>
<div class="t" style="left:449px;top:1208px;font-size:26px;font-weight:bold;color:#e8222a;letter-spacing:0.4px">3.康秋V粘贴</div>
</body></html>
